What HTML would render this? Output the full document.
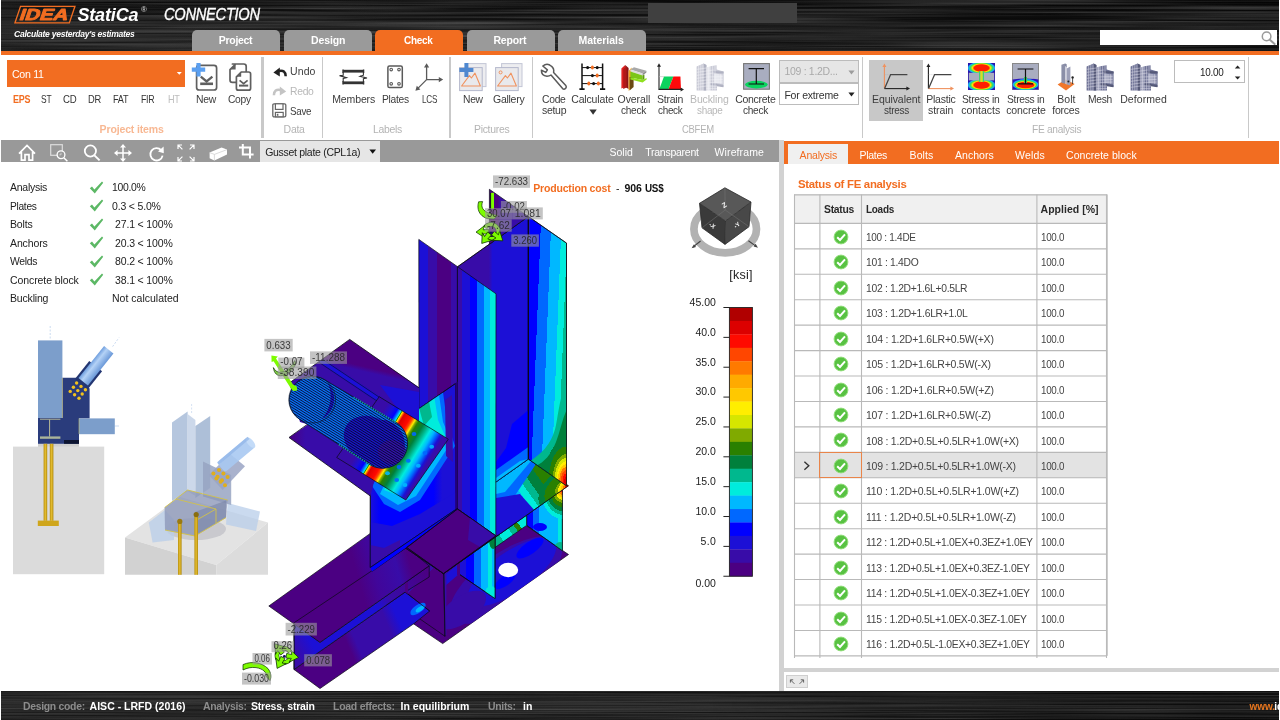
<!DOCTYPE html>
<html lang="en"><head><meta charset="utf-8"><title>IDEA StatiCa Connection</title>
<style>
html,body{margin:0;padding:0;background:#fff;}
#app{position:absolute;left:0;top:0;width:1280px;height:720px;overflow:hidden;will-change:transform;}
body{width:1280px;height:720px;overflow:hidden;position:relative;font-family:"Liberation Sans",sans-serif;}
.t{position:absolute;transform-origin:0 50%;white-space:nowrap;line-height:14px;font-family:"Liberation Sans",sans-serif;}
.r{position:absolute;box-sizing:border-box;}
svg{overflow:visible;}
svg text{font-family:"Liberation Sans",sans-serif;}
.metal{background:
 linear-gradient(90deg,rgba(255,255,255,.01) 0,rgba(255,255,255,.02) 30%,rgba(255,255,255,0) 50%,rgba(0,0,0,.3) 75%,rgba(0,0,0,.35) 100%),
 linear-gradient(180deg,#090909 0,#131313 30%,#1c1c1c 62%,#181818 88%,#111111 100%);}
.metal.sb{background:linear-gradient(90deg,rgba(0,0,0,0) 0,rgba(0,0,0,0) 55%,rgba(0,0,0,.5) 82%,rgba(0,0,0,.6) 100%),linear-gradient(180deg,#0e0e0e 0,#1c1c1c 12%,#262626 45%,#202020 75%,#181818 100%);}
.brush{position:absolute;left:0;top:0;width:100%;height:100%;}

</style></head>
<body>
<div id="app">
<header id="titlebar">
<div class="r metal" style="left:1px;top:0;width:1278px;height:51px"><svg class="brush" width="1278" height="51" preserveAspectRatio="none"><filter id="brushed" x="0" y="0" width="100%" height="100%"><feTurbulence type="fractalNoise" baseFrequency="0.0035 0.42" numOctaves="3" seed="4"/><feColorMatrix type="matrix" values="0 0 0 0 1  0 0 0 0 1  0 0 0 0 1  0.34 0 0 0 -0.10"/></filter><filter id="brushedk" x="0" y="0" width="100%" height="100%"><feTurbulence type="fractalNoise" baseFrequency="0.003 0.5" numOctaves="2" seed="11"/><feColorMatrix type="matrix" values="0 0 0 0 0  0 0 0 0 0  0 0 0 0 0  0.7 0 0 0 -0.2"/></filter><rect width="1278" height="51" filter="url(#brushedk)"/><rect width="1278" height="51" filter="url(#brushed)"/></svg></div>
<div class="r" style="left:647.5px;top:3px;width:149.5px;height:20px;background:#404040;"></div>
<svg class="r" style="left:0px;top:0px;" width="160" height="51" viewBox="0 0 160 51">
<g transform="translate(7.8 0) skewX(-18.7)">
<rect x="14.9" y="6.4" width="54.4" height="16.5" fill="none" stroke="#f26d21" stroke-width="1.4"/>
<text x="17.6" y="20.5" font-size="16" font-weight="bold" textLength="48.4" lengthAdjust="spacingAndGlyphs" fill="#f26d21" stroke="#f26d21" stroke-width="0.9" stroke-linejoin="round">IDEA</text>
</g></svg>
<span class="t" style="left:77.40px;top:7.80px;font-size:18px;color:#fff;letter-spacing:-0.134px;font-weight:bold;font-style:italic;">StatiCa</span>
<span class="t" style="left:141.00px;top:3.20px;font-size:8px;color:#ddd;">®</span>
<span class="t" style="left:163.50px;top:8.10px;font-size:16px;color:#fff;letter-spacing:-0.300px;font-style:italic;transform:scaleX(0.9164);-webkit-text-stroke:0.35px #fff;">CONNECTION</span>
<span class="t" style="left:14.40px;top:27.20px;font-size:9.5px;color:#fff;letter-spacing:-0.300px;font-weight:bold;font-style:italic;transform:scaleX(0.9002);">Calculate yesterday's estimates</span>
<nav id="maintabs">
<div class="r" style="left:192px;top:30px;width:88px;height:21.5px;background:#9a9a9a;border-radius:5px 5px 0 0;"></div>
<span class="t" style="left:218.80px;top:33.40px;font-size:10.5px;color:#fff;letter-spacing:-0.300px;font-weight:bold;">Project</span>
<div class="r" style="left:283.5px;top:30px;width:88px;height:21.5px;background:#9a9a9a;border-radius:5px 5px 0 0;"></div>
<span class="t" style="left:311.00px;top:33.40px;font-size:10.5px;color:#fff;letter-spacing:-0.119px;font-weight:bold;">Design</span>
<div class="r" style="left:375px;top:30px;width:88px;height:21.5px;background:#f26d21;border-radius:5px 5px 0 0;"></div>
<span class="t" style="left:404.40px;top:33.40px;font-size:10.5px;color:#fff;letter-spacing:-0.300px;font-weight:bold;transform:scaleX(0.9516);">Check</span>
<div class="r" style="left:466.5px;top:30px;width:88px;height:21.5px;background:#9a9a9a;border-radius:5px 5px 0 0;"></div>
<span class="t" style="left:493.40px;top:33.40px;font-size:10.5px;color:#fff;letter-spacing:-0.147px;font-weight:bold;">Report</span>
<div class="r" style="left:558px;top:30px;width:88px;height:21.5px;background:#9a9a9a;border-radius:5px 5px 0 0;"></div>
<span class="t" style="left:578.40px;top:33.40px;font-size:10.5px;color:#fff;letter-spacing:-0.010px;font-weight:bold;">Materials</span>
</nav>
<div class="r" style="left:1100px;top:29.7px;width:177px;height:15.5px;background:#fff;"></div>
<svg class="r" style="left:1259px;top:30px;" width="18" height="16" viewBox="0 0 18 16"><circle cx="7.6" cy="6.4" r="4.3" fill="none" stroke="#9a9a9a" stroke-width="1.5"/><path d="M10.6,9.6 L15.6,14" stroke="#9a9a9a" stroke-width="2" stroke-linecap="round"/></svg>
<div class="r" style="left:0.5px;top:50.6px;width:1278.5px;height:4.4px;background:#f26d21;"></div>
</header><section id="ribbon">
<div class="r" style="left:7px;top:60px;width:178px;height:26.8px;background:#f26d21;"></div>
<span class="t" style="left:12.20px;top:66.80px;font-size:11px;color:#fff;letter-spacing:-0.300px;transform:scaleX(0.9626);">Con 11</span>
<svg class="r" style="left:176px;top:71px;" width="7" height="5" viewBox="0 0 7 5"><path d="M0.8,1 L5.8,1 L3.3,3.8 Z" fill="#fff"/></svg>
<span class="t" style="left:12.60px;top:91.60px;font-size:10.5px;color:#f26d21;letter-spacing:-0.300px;font-weight:bold;transform:scaleX(0.8527);">EPS</span>
<span class="t" style="left:40.60px;top:91.60px;font-size:10.5px;color:#333;letter-spacing:-0.300px;transform:scaleX(0.8027);">ST</span>
<span class="t" style="left:63.00px;top:91.60px;font-size:10.5px;color:#333;letter-spacing:-0.300px;transform:scaleX(0.9161);">CD</span>
<span class="t" style="left:88.40px;top:91.60px;font-size:10.5px;color:#333;letter-spacing:-0.300px;transform:scaleX(0.8899);">DR</span>
<span class="t" style="left:112.60px;top:91.60px;font-size:10.5px;color:#333;letter-spacing:-0.300px;transform:scaleX(0.8668);">FAT</span>
<span class="t" style="left:141.00px;top:91.60px;font-size:10.5px;color:#333;letter-spacing:-0.300px;transform:scaleX(0.8368);">FIR</span>
<span class="t" style="left:167.60px;top:91.60px;font-size:10.5px;color:#bdbdbd;letter-spacing:-0.300px;transform:scaleX(0.8682);">HT</span>
<span class="t" style="left:99.60px;top:122.20px;font-size:10.5px;color:#f8b893;letter-spacing:-0.142px;font-weight:bold;">Project items</span>
<svg class="r" style="left:192px;top:63px;" width="28" height="29" viewBox="0 0 28 29"><rect x="4.6" y="2.4" width="20" height="24.6" rx="2.6" fill="#fff" stroke="#5f5f5f" stroke-width="1.7"/>
<path d="M8.8,13.6 L14.6,18.4 L20.4,13.6" fill="none" stroke="#5f5f5f" stroke-width="2.3"/>
<path d="M8.2,20.8 L21,20.8" stroke="#5f5f5f" stroke-width="2.6"/>
<path d="M6.5,0 L6.5,13.4 M-0.2,6.7 L13.2,6.7" stroke="#5b9ff0" stroke-width="4.2"/></svg>
<span class="t" style="left:195.80px;top:91.60px;font-size:10.5px;color:#3c3c3c;letter-spacing:-0.300px;transform:scaleX(0.9893);">New</span>
<svg class="r" style="left:228.6px;top:63px;" width="23" height="29" viewBox="0 0 23 29"><path d="M3.4,1 L14.8,1 Q17.2,1 17.2,3.4 L17.2,19.4 L3.4,19.4 Q1,19.4 1,17 L1,6.6 L6.6,1 Z" fill="#fff" stroke="#5f5f5f" stroke-width="1.7" stroke-linejoin="round"/>
<path d="M1.2,6.6 L6.6,6.6 L6.6,1.2 Z" fill="#5f5f5f"/>
<path d="M12.2,9 L19.6,9 Q21.6,9 21.6,11 L21.6,25.2 Q21.6,27.2 19.6,27.2 L9.4,27.2 Q7.4,27.2 7.4,25.2 L7.4,13.8 Z" fill="#fff" stroke="#5f5f5f" stroke-width="1.7" stroke-linejoin="round"/>
<path d="M7.6,13.8 L12.2,13.8 L12.2,9.2 Z" fill="#5f5f5f"/>
<path d="M10.6,17.4 L14.6,20.6 L18.6,17.4" fill="none" stroke="#5f5f5f" stroke-width="1.7"/>
<path d="M10,22.6 L19.2,22.6" stroke="#5f5f5f" stroke-width="2"/></svg>
<span class="t" style="left:228.20px;top:91.60px;font-size:10.5px;color:#3c3c3c;letter-spacing:-0.300px;transform:scaleX(0.9769);">Copy</span>
<div class="r" style="left:260.6px;top:57px;width:3.4px;height:80.5px;background:#c9c9c9;"></div>
<svg class="r" style="left:272.6px;top:66.6px;" width="14" height="10" viewBox="0 0 14 10"><path d="M0.4,5.4 L6.8,0.6 L6.8,9.6 Z" fill="#222"/><path d="M6,4 Q12.4,2.6 12.7,9.2" fill="none" stroke="#222" stroke-width="2.5"/></svg>
<span class="t" style="left:290.00px;top:64.20px;font-size:10.5px;color:#3c3c3c;letter-spacing:0.113px;">Undo</span>
<svg class="r" style="left:272.6px;top:86.4px;" width="14" height="10" viewBox="0 0 14 10"><g transform="translate(13.6,0) scale(-1,1)"><path d="M0.4,5.4 L6.8,0.6 L6.8,9.6 Z" fill="#c4c4c4"/><path d="M6,4 Q12.4,2.6 12.7,9.2" fill="none" stroke="#c4c4c4" stroke-width="2.5"/></g></svg>
<span class="t" style="left:290.00px;top:84.00px;font-size:10.5px;color:#b8b8b8;letter-spacing:-0.300px;transform:scaleX(0.9851);">Redo</span>
<svg class="r" style="left:271.8px;top:103px;" width="15" height="15" viewBox="0 0 15 15"><rect x="0.8" y="0.8" width="13" height="13" rx="1.2" fill="#fff" stroke="#666" stroke-width="1.3"/>
<rect x="3.4" y="0.8" width="7.6" height="5.6" fill="#fff" stroke="#666" stroke-width="1.2"/>
<rect x="3.4" y="9.4" width="7.8" height="4.4" fill="#fff" stroke="#666" stroke-width="1.2"/>
<rect x="4.8" y="10.8" width="1.6" height="2" fill="#666"/></svg>
<span class="t" style="left:290.00px;top:103.60px;font-size:10.5px;color:#3c3c3c;letter-spacing:-0.300px;transform:scaleX(0.9313);">Save</span>
<span class="t" style="left:283.60px;top:122.20px;font-size:10.5px;color:#b4b4b4;letter-spacing:-0.300px;">Data</span>
<div class="r" style="left:322px;top:57px;width:1.2px;height:80.5px;background:#c9c9c9;"></div>
<svg class="r" style="left:339.4px;top:66.6px;" width="29" height="20" viewBox="0 0 29 20"><path d="M4,2.6 L4,6 M24.6,2.6 L24.6,6 M4,14 L4,17.6 M24.6,14 L24.6,17.6" stroke="#333" stroke-width="1.4"/>
<path d="M4,4.2 L24.6,4.2" stroke="#333" stroke-width="2.8"/>
<path d="M4,15.8 L24.6,15.8" stroke="#333" stroke-width="2.8"/>
<path d="M4.2,5.6 L4.2,8.2 L0.6,8.6 L7.4,10.6 L4.2,11.4 L4.2,14.4" fill="none" stroke="#333" stroke-width="1.1"/>
<path d="M24.4,5.6 L24.4,8.2 L21,9.4 L28,11 L24.4,11.8 L24.4,14.4" fill="none" stroke="#333" stroke-width="1.1"/></svg>
<span class="t" style="left:332.20px;top:91.60px;font-size:10.5px;color:#3c3c3c;letter-spacing:-0.118px;">Members</span>
<svg class="r" style="left:387.2px;top:65.2px;" width="17" height="24" viewBox="0 0 17 24"><rect x="0.9" y="0.9" width="14.4" height="21.6" rx="1.6" fill="#fff" stroke="#5a5a5a" stroke-width="1.5"/>
<g fill="none" stroke="#5a5a5a" stroke-width="1.1"><circle cx="4.2" cy="4.6" r="1.3"/><circle cx="12" cy="4.6" r="1.3"/><circle cx="4.2" cy="18.8" r="1.3"/><circle cx="12" cy="18.8" r="1.3"/></g></svg>
<span class="t" style="left:382.20px;top:91.60px;font-size:10.5px;color:#3c3c3c;letter-spacing:-0.300px;transform:scaleX(0.9769);">Plates</span>
<svg class="r" style="left:414.6px;top:62.8px;" width="29" height="29" viewBox="0 0 29 29"><path d="M11.6,16.6 L11.6,3.4 M11.6,16.6 L25,16.6 M11.6,16.6 L2.6,25.6" stroke="#5a5a5a" stroke-width="1.3" fill="none"/>
<path d="M11.6,0.2 L14.2,4.6 L9,4.6 Z M28.2,16.6 L23.8,19.2 L23.8,14 Z M0.4,27.8 L1.8,22.8 L5.4,26.4 Z" fill="#5a5a5a"/></svg>
<span class="t" style="left:421.60px;top:91.60px;font-size:10.5px;color:#3c3c3c;letter-spacing:-0.300px;transform:scaleX(0.7769);">LCS</span>
<span class="t" style="left:373.00px;top:122.20px;font-size:10.5px;color:#b4b4b4;letter-spacing:-0.300px;transform:scaleX(0.9935);">Labels</span>
<div class="r" style="left:449.4px;top:57px;width:1.2px;height:80.5px;background:#c9c9c9;"></div>
<svg class="r" style="left:458.8px;top:63px;" width="28" height="29" viewBox="0 0 28 29"><rect x="6.6" y="0.6" width="20.4" height="23" fill="#ededf0" stroke="#c3c6d6" stroke-width="1"/>
<rect x="0.6" y="4.6" width="22.6" height="23" fill="#e9e9ec" stroke="#b4b8cc" stroke-width="1"/>
<path d="M2.6,23 L10.4,12.6 L12.4,15 L16,10.2 L21.4,23 Z" fill="none" stroke="#f0925e" stroke-width="1.1" stroke-linejoin="round"/><path d="M7.4,0 L7.4,14 M0.4,7 L14.4,7" stroke="#4f88d0" stroke-width="4"/></svg>
<span class="t" style="left:462.60px;top:91.60px;font-size:10.5px;color:#3c3c3c;letter-spacing:-0.300px;transform:scaleX(0.9797);">New</span>
<svg class="r" style="left:494.8px;top:63px;" width="28" height="29" viewBox="0 0 28 29"><rect x="6.6" y="0.6" width="20.4" height="23" fill="#ededf0" stroke="#c3c6d6" stroke-width="1"/>
<rect x="0.6" y="4.6" width="22.6" height="23" fill="#e9e9ec" stroke="#b4b8cc" stroke-width="1"/>
<path d="M2.6,23 L10.4,12.6 L12.4,15 L16,10.2 L21.4,23 Z" fill="none" stroke="#f0925e" stroke-width="1.1" stroke-linejoin="round"/><circle cx="5.6" cy="9.4" r="1.5" fill="none" stroke="#f0925e" stroke-width="1"/></svg>
<span class="t" style="left:493.00px;top:91.60px;font-size:10.5px;color:#3c3c3c;letter-spacing:-0.268px;">Gallery</span>
<span class="t" style="left:474.00px;top:122.20px;font-size:10.5px;color:#b4b4b4;letter-spacing:-0.300px;transform:scaleX(0.9950);">Pictures</span>
<div class="r" style="left:531.6px;top:57px;width:1.2px;height:80.5px;background:#c9c9c9;"></div>
<svg class="r" style="left:540.6px;top:63.4px;" width="27" height="28" viewBox="0 0 27 28"><path d="M10.4,3.2 Q6.2,-0.6 1.8,3 L6.4,6.8 L4.8,9.4 L0.4,7.2 Q0.2,12.6 6,13.2 Q8.4,13.2 10,12 L21.6,25.6 Q23,26.8 24.6,25.4 Q26,23.8 24.8,22.4 L12.6,9.4 Q13.4,5.6 10.4,3.2 Z" fill="#fff" stroke="#5a5a5a" stroke-width="1.5" stroke-linejoin="round"/></svg>
<span class="t" style="left:542.20px;top:91.60px;font-size:10.5px;color:#3c3c3c;letter-spacing:-0.300px;transform:scaleX(0.9851);">Code</span>
<span class="t" style="left:542.00px;top:103.00px;font-size:10.5px;color:#3c3c3c;letter-spacing:-0.300px;">setup</span>
<svg class="r" style="left:578.8px;top:63.4px;" width="27" height="28" viewBox="0 0 27 28"><path d="M3,0.6 L3,26 M23.6,0.6 L23.6,26" stroke="#111" stroke-width="1.5"/>
<path d="M0.4,26.2 L5.6,26.2 M21,26.2 L26.2,26.2" stroke="#111" stroke-width="1.8"/>
<path d="M3,4.6 L23.6,4.6 M3,12.6 L23.6,12.6 M3,20.6 L23.6,20.6" stroke="#111" stroke-width="1"/>
<g fill="#111"><ellipse cx="8.6" cy="4.6" rx="1.5" ry="1.7"/><ellipse cx="18.2" cy="4.6" rx="1.5" ry="1.7"/><ellipse cx="13.4" cy="12.6" rx="1.5" ry="1.7"/><ellipse cx="14.6" cy="20.6" rx="1.5" ry="1.7"/></g>
<g fill="#f26d21"><ellipse cx="13.4" cy="4.6" rx="1.5" ry="2"/><ellipse cx="18.2" cy="12.6" rx="1.5" ry="2"/><ellipse cx="9.8" cy="20.6" rx="1.5" ry="2"/><ellipse cx="19.4" cy="20.6" rx="1.5" ry="2"/></g></svg>
<span class="t" style="left:571.20px;top:91.60px;font-size:10.5px;color:#3c3c3c;letter-spacing:-0.142px;">Calculate</span>
<svg class="r" style="left:588.6px;top:108.6px;" width="9" height="7" viewBox="0 0 9 7"><path d="M0.4,0.6 L7.8,0.6 L4.1,5.8 Z" fill="#333"/></svg>
<svg class="r" style="left:619.6px;top:62.8px;" width="28" height="29" viewBox="0 0 28 29"><polygon points="1.4,5.6 5.2,2 5.2,24 1.4,25.6" fill="#e02020"/>
<polygon points="5.2,2 8.6,5 8.6,26 5.2,24" fill="#8c1414"/>
<polygon points="3.2,6 6.6,3.6 6.6,24.6 3.2,26" fill="#b01818"/>
<polygon points="8.6,8 11.6,4.6 11.6,24.4 8.6,28" fill="#f5a623"/>
<polygon points="9.6,14 13.6,14 13.6,24 9.6,27.6" fill="#6a4a14"/>
<polygon points="10.4,6.6 14,4.2 26.4,7.8 22.6,10.6" fill="#a8a8a8"/>
<polygon points="10.4,6.6 22.6,10.6 22.6,12.6 10.4,8.6" fill="#dcdcdc"/>
<polygon points="10.4,8.6 22.6,12.6 22.6,17 10.4,14.4" fill="#7bc618"/>
<polygon points="22.6,10.6 26.4,7.8 26.4,9.6 22.6,12.6" fill="#8c8c8c"/>
<polygon points="10.4,14.4 22.6,17 26.6,15 26.6,16.6 22.6,19.4 10.4,16.6" fill="#8fe01e"/>
<polygon points="22.6,12.6 24.4,11.4 24.4,16 22.6,17" fill="#5c9a10"/></svg>
<span class="t" style="left:617.60px;top:91.60px;font-size:10.5px;color:#3c3c3c;letter-spacing:-0.088px;">Overall</span>
<span class="t" style="left:621.00px;top:103.00px;font-size:10.5px;color:#3c3c3c;letter-spacing:-0.300px;transform:scaleX(0.9637);">check</span>
<svg class="r" style="left:655.6px;top:62.8px;" width="29" height="29" viewBox="0 0 29 29"><polygon points="3.4,26 8,13.6 17.4,13.6 12.6,26" fill="#0bd35e"/>
<polygon points="12.6,26 17.4,13.6 24.4,13.6 25,26" fill="#ff0a0a"/>
<path d="M3,27 L3,2 M2.4,26.4 L26,26.4" stroke="#222" stroke-width="1.1" fill="none"/>
<path d="M3,0.2 L5,3.8 L1,3.8 Z M28,26.4 L24.6,28.4 L24.6,24.4 Z" fill="#222"/>
<path d="M3,13.6 L8,13.6" stroke="#bbb" stroke-width="0.6"/></svg>
<span class="t" style="left:657.00px;top:91.60px;font-size:10.5px;color:#3c3c3c;letter-spacing:-0.238px;">Strain</span>
<span class="t" style="left:658.00px;top:103.00px;font-size:10.5px;color:#3c3c3c;letter-spacing:-0.300px;transform:scaleX(0.9415);">check</span>
<svg class="r" style="left:696px;top:63px;" width="28" height="28" viewBox="0 0 28 28"><polygon points="0.6,3.4 7.6,0.6 10.4,2 10.4,27.6 0.6,27.6" fill="#c9cad6"/>
<polygon points="7.6,0.6 10.4,2 10.4,27.6 7.6,27.6" fill="#b0b2c2"/>
<polygon points="10.4,4.6 14.4,3.2 14.4,27.6 10.4,27.6" fill="#e4e5ec"/>
<polygon points="14.4,3.2 20.6,2.2 20.6,6.6 27.6,8.6 27.6,24 21,22.2 21,27.6 14.4,27.6" fill="#c9cad6"/>
<polygon points="17.6,8 27.6,8.6 27.6,10.4 17.6,9.8" fill="#b0b2c2"/>
<polygon points="17.8,10.4 26.6,11.4 26.6,21 17.8,19.6" fill="#e4e5ec"/>
<polygon points="14.6,20 27.4,22 27.4,24.2 14.6,22.2" fill="#b0b2c2"/>
<path d="M2.6,2.8 L2.6,27.6 M4.8,2 L4.8,27.6 M7,1.2 L7,27.6 M12.4,4 L12.4,27.6 M16.6,3 L16.6,27.6 M19,2.6 L19,27.6 M22,11 L22,20.4 M24.4,11.2 L24.4,20.8 M20,10.6 L20,20" stroke="#f4f4f8" stroke-width="0.5" fill="none"/>
<path d="M0.6,6.4 L10.4,5 M0.6,9.4 L10.4,8 M0.6,12.4 L10.4,11 M0.6,15.4 L10.4,14 M0.6,18.4 L10.4,17 M0.6,21.4 L10.4,20 M0.6,24.4 L10.4,23 M10.4,8 L17.6,7 M10.4,11 L17.6,10 M10.4,14 L26.6,13.6 M10.4,17 L26.6,16.4 M10.4,20 L26.6,19 M10.4,23 L21,23 M10.4,25.6 L21,25.6" stroke="#f4f4f8" stroke-width="0.5" fill="none"/></svg>
<span class="t" style="left:690.00px;top:91.60px;font-size:10.5px;color:#b8b8b8;letter-spacing:-0.121px;">Buckling</span>
<span class="t" style="left:697.00px;top:103.00px;font-size:10.5px;color:#b8b8b8;letter-spacing:-0.300px;transform:scaleX(0.9431);">shape</span>
<svg class="r" style="left:743px;top:63.2px;" width="27" height="27" viewBox="0 0 27 27"><rect x="0.6" y="0.6" width="25.8" height="25.6" fill="#a9adc0" stroke="#777" stroke-width="1.1"/>
<ellipse cx="13.4" cy="21.6" rx="11.4" ry="3.8" fill="#0bd35e"/>
<path d="M5.6,5.6 L21,5.6 M5.6,21 L21,21 M13.3,5.6 L13.3,21" stroke="#111" stroke-width="1.2" fill="none"/></svg>
<span class="t" style="left:735.20px;top:91.60px;font-size:10.5px;color:#3c3c3c;letter-spacing:-0.281px;">Concrete</span>
<span class="t" style="left:743.00px;top:103.00px;font-size:10.5px;color:#3c3c3c;letter-spacing:-0.300px;transform:scaleX(0.9637);">check</span>
<div class="r" style="left:779.4px;top:60px;width:79.4px;height:22.8px;background:#e6e6e6;border:1px solid #bcbcbc;"></div>
<span class="t" style="left:784.40px;top:64.40px;font-size:10.5px;color:#a9a9a9;letter-spacing:-0.300px;">109 : 1.2D...</span>
<svg class="r" style="left:848px;top:69.6px;" width="8" height="6" viewBox="0 0 8 6"><path d="M0.4,0.6 L6.6,0.6 L3.5,4.6 Z" fill="#9c9c9c"/></svg>
<div class="r" style="left:779.4px;top:82.8px;width:79.4px;height:22.6px;background:#fff;border:1px solid #bcbcbc;"></div>
<span class="t" style="left:784.40px;top:87.60px;font-size:10.5px;color:#333;letter-spacing:-0.216px;">For extreme</span>
<svg class="r" style="left:848px;top:92px;" width="8" height="6" viewBox="0 0 8 6"><path d="M0.4,0.6 L6.6,0.6 L3.5,4.6 Z" fill="#222"/></svg>
<span class="t" style="left:681.60px;top:122.20px;font-size:10.5px;color:#b4b4b4;letter-spacing:-0.300px;transform:scaleX(0.9022);">CBFEM</span>
<div class="r" style="left:862px;top:57px;width:1.2px;height:80.5px;background:#c9c9c9;"></div>
<div class="r" style="left:868.8px;top:60px;width:54.4px;height:61px;background:#c8c8c8;"></div>
<svg class="r" style="left:881.6px;top:63px;" width="29" height="29" viewBox="0 0 29 29"><path d="M2.4,25.4 L2.4,3" stroke="#f0925e" stroke-width="1.1"/><path d="M2.4,0.4 L4.4,4 L0.4,4 Z" fill="#f0925e"/>
<path d="M2.4,25.6 L25,25.6" stroke="#222" stroke-width="1.1"/><path d="M28,25.6 L24.4,27.6 L24.4,23.6 Z" fill="#222"/>
<path d="M2.6,25.4 L8.6,11.6 L25.4,11.6" fill="none" stroke="#444" stroke-width="1.3"/>
<path d="M2.6,11.6 L8,11.6" stroke="#aaa" stroke-width="0.5" stroke-dasharray="1,1"/></svg>
<span class="t" style="left:872.00px;top:91.60px;font-size:10.5px;color:#3c3c3c;letter-spacing:-0.080px;">Equivalent</span>
<span class="t" style="left:883.60px;top:103.00px;font-size:10.5px;color:#3c3c3c;letter-spacing:-0.300px;transform:scaleX(0.9523);">stress</span>
<svg class="r" style="left:925.8px;top:63px;" width="29" height="29" viewBox="0 0 29 29"><path d="M2.4,25.4 L2.4,3" stroke="#222" stroke-width="1.1"/><path d="M2.4,0.4 L4.4,4 L0.4,4 Z" fill="#222"/>
<path d="M2.4,25.6 L25,25.6" stroke="#f0925e" stroke-width="1.1"/><path d="M28,25.6 L24.4,27.6 L24.4,23.6 Z" fill="#f0925e"/>
<path d="M2.6,25.4 L8.6,11.6 L25.4,11.6" fill="none" stroke="#444" stroke-width="1.3"/>
<path d="M2.6,11.6 L8,11.6" stroke="#aaa" stroke-width="0.5" stroke-dasharray="1,1"/></svg>
<span class="t" style="left:926.20px;top:91.60px;font-size:10.5px;color:#3c3c3c;letter-spacing:-0.213px;">Plastic</span>
<span class="t" style="left:928.00px;top:103.00px;font-size:10.5px;color:#3c3c3c;letter-spacing:-0.087px;">strain</span>
<svg class="r" style="left:967.6px;top:63.4px;overflow:hidden;" width="27" height="27" viewBox="0 0 27 27"><defs><radialGradient id="gct" cx="50%" cy="50%" r="50%"><stop offset="0" stop-color="#ff1e00"/><stop offset=".5" stop-color="#ff1e00"/><stop offset=".62" stop-color="#ffe000"/><stop offset=".76" stop-color="#30e060"/><stop offset=".88" stop-color="#18b0ff"/><stop offset="1" stop-color="#2010b0"/></radialGradient></defs>
<rect x="0" y="0" width="27" height="27" fill="#2a14a8"/>
<ellipse cx="13.5" cy="5" rx="14.6" ry="6.6" fill="url(#gct)"/>
<ellipse cx="13.5" cy="22" rx="14.6" ry="6.6" fill="url(#gct)"/>
<rect x="0.8" y="9.8" width="25.4" height="7.6" fill="#a9adc0"/>
<rect x="12.2" y="8" width="2.6" height="11" fill="#d8e020"/>
<rect x="11" y="8" width="1.2" height="11" fill="#40d070"/><rect x="14.8" y="8" width="1.2" height="11" fill="#40d070"/></svg>
<span class="t" style="left:962.20px;top:91.60px;font-size:10.5px;color:#3c3c3c;letter-spacing:-0.300px;transform:scaleX(0.9791);">Stress in</span>
<span class="t" style="left:961.20px;top:103.00px;font-size:10.5px;color:#3c3c3c;letter-spacing:-0.008px;">contacts</span>
<svg class="r" style="left:1012px;top:63.4px;overflow:hidden;" width="27" height="27" viewBox="0 0 27 27"><rect x="0.5" y="0.5" width="26" height="26" fill="#a9adc0" stroke="#888" stroke-width="1"/>
<path d="M0.6,26.4 L0.6,16.6 Q13.5,14.6 26.4,16.6 L26.4,26.4 Z" fill="#2a14c0"/>
<ellipse cx="13.5" cy="21.6" rx="12.8" ry="5.6" fill="#18b0ff"/>
<ellipse cx="13.5" cy="21.8" rx="11.6" ry="4.8" fill="#30e060"/>
<ellipse cx="13.5" cy="22" rx="10.4" ry="4" fill="#ffe000"/>
<ellipse cx="13.5" cy="22" rx="9" ry="3.2" fill="#ff1e00"/>
<path d="M13.5,14 L13.5,20" stroke="#30e060" stroke-width="3"/>
<path d="M5.6,6 L21.4,6 M6,20.8 L21,20.8 M13.5,6 L13.5,20.8" stroke="#111" stroke-width="1.2" fill="none"/></svg>
<span class="t" style="left:1007.20px;top:91.60px;font-size:10.5px;color:#3c3c3c;letter-spacing:-0.300px;transform:scaleX(0.9791);">Stress in</span>
<span class="t" style="left:1006.20px;top:103.00px;font-size:10.5px;color:#3c3c3c;letter-spacing:-0.090px;">concrete</span>
<svg class="r" style="left:1056.6px;top:63px;" width="19" height="28" viewBox="0 0 19 28"><polygon points="0.6,21.6 8.6,16.4 17.6,21 9,27.4" fill="#f0762a"/>
<polygon points="4.4,1.8 8.2,0.4 8.2,20.8 4.4,19.8" fill="#8b8fa8"/>
<polygon points="8.2,2.6 9.8,3.4 9.8,21.4 8.2,20.8" fill="#c8cad8"/>
<polygon points="9.8,5.4 13.4,3.4 13.4,22.6 9.8,21.4" fill="#9da0b8"/>
<polygon points="8.2,0.4 9.6,1.2 9.6,4 8.2,3" fill="#6e7290"/>
<path d="M15.6,14.6 L15.6,21" stroke="#222" stroke-width="0.8"/><circle cx="15.6" cy="14.4" r="1.2" fill="#222"/><circle cx="11.4" cy="18.6" r="1" fill="#222"/></svg>
<span class="t" style="left:1057.20px;top:91.60px;font-size:10.5px;color:#3c3c3c;letter-spacing:0.075px;">Bolt</span>
<span class="t" style="left:1052.20px;top:103.00px;font-size:10.5px;color:#3c3c3c;letter-spacing:-0.229px;">forces</span>
<svg class="r" style="left:1086.2px;top:63px;" width="28" height="28" viewBox="0 0 28 28"><polygon points="0.6,3.4 7.6,0.6 10.4,2 10.4,27.6 0.6,27.6" fill="#6f7396"/>
<polygon points="7.6,0.6 10.4,2 10.4,27.6 7.6,27.6" fill="#555978"/>
<polygon points="10.4,4.6 14.4,3.2 14.4,27.6 10.4,27.6" fill="#9a9db8"/>
<polygon points="14.4,3.2 20.6,2.2 20.6,6.6 27.6,8.6 27.6,24 21,22.2 21,27.6 14.4,27.6" fill="#6f7396"/>
<polygon points="17.6,8 27.6,8.6 27.6,10.4 17.6,9.8" fill="#555978"/>
<polygon points="17.8,10.4 26.6,11.4 26.6,21 17.8,19.6" fill="#9a9db8"/>
<polygon points="14.6,20 27.4,22 27.4,24.2 14.6,22.2" fill="#555978"/>
<path d="M2.6,2.8 L2.6,27.6 M4.8,2 L4.8,27.6 M7,1.2 L7,27.6 M12.4,4 L12.4,27.6 M16.6,3 L16.6,27.6 M19,2.6 L19,27.6 M22,11 L22,20.4 M24.4,11.2 L24.4,20.8 M20,10.6 L20,20" stroke="#dcdce8" stroke-width="0.5" fill="none"/>
<path d="M0.6,6.4 L10.4,5 M0.6,9.4 L10.4,8 M0.6,12.4 L10.4,11 M0.6,15.4 L10.4,14 M0.6,18.4 L10.4,17 M0.6,21.4 L10.4,20 M0.6,24.4 L10.4,23 M10.4,8 L17.6,7 M10.4,11 L17.6,10 M10.4,14 L26.6,13.6 M10.4,17 L26.6,16.4 M10.4,20 L26.6,19 M10.4,23 L21,23 M10.4,25.6 L21,25.6" stroke="#dcdce8" stroke-width="0.5" fill="none"/></svg>
<span class="t" style="left:1088.00px;top:91.60px;font-size:10.5px;color:#3c3c3c;letter-spacing:-0.300px;transform:scaleX(0.9785);">Mesh</span>
<svg class="r" style="left:1130.2px;top:63px;" width="28" height="28" viewBox="0 0 28 28"><polygon points="0.6,3.4 7.6,0.6 10.4,2 10.4,27.6 0.6,27.6" fill="#6f7396"/>
<polygon points="7.6,0.6 10.4,2 10.4,27.6 7.6,27.6" fill="#555978"/>
<polygon points="10.4,4.6 14.4,3.2 14.4,27.6 10.4,27.6" fill="#9a9db8"/>
<polygon points="14.4,3.2 20.6,2.2 20.6,6.6 27.6,8.6 27.6,24 21,22.2 21,27.6 14.4,27.6" fill="#6f7396"/>
<polygon points="17.6,8 27.6,8.6 27.6,10.4 17.6,9.8" fill="#555978"/>
<polygon points="17.8,10.4 26.6,11.4 26.6,21 17.8,19.6" fill="#9a9db8"/>
<polygon points="14.6,20 27.4,22 27.4,24.2 14.6,22.2" fill="#555978"/>
<path d="M2.6,2.8 L2.6,27.6 M4.8,2 L4.8,27.6 M7,1.2 L7,27.6 M12.4,4 L12.4,27.6 M16.6,3 L16.6,27.6 M19,2.6 L19,27.6 M22,11 L22,20.4 M24.4,11.2 L24.4,20.8 M20,10.6 L20,20" stroke="#dcdce8" stroke-width="0.5" fill="none"/>
<path d="M0.6,6.4 L10.4,5 M0.6,9.4 L10.4,8 M0.6,12.4 L10.4,11 M0.6,15.4 L10.4,14 M0.6,18.4 L10.4,17 M0.6,21.4 L10.4,20 M0.6,24.4 L10.4,23 M10.4,8 L17.6,7 M10.4,11 L17.6,10 M10.4,14 L26.6,13.6 M10.4,17 L26.6,16.4 M10.4,20 L26.6,19 M10.4,23 L21,23 M10.4,25.6 L21,25.6" stroke="#dcdce8" stroke-width="0.5" fill="none"/></svg>
<span class="t" style="left:1120.20px;top:91.60px;font-size:10.5px;color:#3c3c3c;letter-spacing:0.077px;">Deformed</span>
<div class="r" style="left:1173.6px;top:60px;width:71px;height:22.8px;background:#fff;border:1px solid #bcbcbc;"></div>
<span class="t" style="left:1200.20px;top:64.60px;font-size:10.5px;color:#222;letter-spacing:-0.300px;transform:scaleX(0.9431);">10.00</span>
<svg class="r" style="left:1233.6px;top:64.6px;" width="8" height="15" viewBox="0 0 8 15"><path d="M0.8,3.4 L6.4,3.4 L3.6,0.4 Z M0.8,11.4 L6.4,11.4 L3.6,14.4 Z" fill="#222"/></svg>
<span class="t" style="left:1032.00px;top:122.20px;font-size:10.5px;color:#b4b4b4;letter-spacing:-0.300px;transform:scaleX(0.9683);">FE analysis</span>
<div class="r" style="left:1248px;top:57px;width:1.2px;height:80.5px;background:#c9c9c9;"></div>
</section><section id="viewbar">
<div class="r" style="left:1px;top:140.4px;width:777.8px;height:21.9px;background:#999;"></div>
<svg class="r" style="left:17.6px;top:143.6px;" width="18" height="18" viewBox="0 0 18 18"><path d="M1,9.6 L9,1.4 L17,9.6 M3.4,8 L3.4,16.2 L7,16.2 L7,10.6 L11,10.6 L11,16.2 L14.6,16.2 L14.6,8" fill="none" stroke="#fff" stroke-width="1.7" stroke-linejoin="miter"/></svg>
<svg class="r" style="left:50px;top:144px;" width="18" height="18" viewBox="0 0 18 18"><rect x="0.7" y="0.7" width="11.6" height="10.6" fill="none" stroke="#ddd" stroke-width="1.2"/><circle cx="11" cy="10.8" r="3.9" fill="#999" stroke="#fff" stroke-width="1.3"/><path d="M13.8,13.8 L17.4,17.2" stroke="#fff" stroke-width="1.5"/><path d="M11,8.8 L11,10.8 L9.4,10.8" stroke="#ddd" stroke-width=".8" fill="none"/></svg>
<svg class="r" style="left:83px;top:144.4px;" width="18" height="18" viewBox="0 0 18 18"><circle cx="7.4" cy="7" r="5.6" fill="none" stroke="#fff" stroke-width="1.8"/><path d="M11.4,11.4 L16.6,16.4" stroke="#fff" stroke-width="2"/></svg>
<svg class="r" style="left:114px;top:143.6px;" width="18" height="18" viewBox="0 0 18 18"><path d="M9,1.6 L9,16.6 M1.6,9 L16.6,9" stroke="#fff" stroke-width="1.5"/><path d="M9,0 L12,3.6 L6,3.6 Z M9,18 L12,14.4 L6,14.4 Z M0,9 L3.6,6 L3.6,12 Z M18,9 L14.4,6 L14.4,12 Z" fill="#fff"/></svg>
<svg class="r" style="left:148px;top:145.6px;" width="17" height="15" viewBox="0 0 17 15"><path d="M13.2,4.2 A6.2,6.2 0 1 0 14.6,9.6" fill="none" stroke="#fff" stroke-width="1.8"/><path d="M10,5.6 L15.6,0.6 L15.8,7.2 Z" fill="#fff"/></svg>
<svg class="r" style="left:177px;top:143.8px;" width="18" height="18" viewBox="0 0 18 18"><g stroke="#fff" stroke-width="1.2" fill="none"><path d="M1,5 L1,1 L5,1 M1.2,1.2 L5.4,5.4"/><path d="M13,1 L17,1 L17,5 M16.8,1.2 L12.6,5.4"/><path d="M1,13 L1,17 L5,17 M1.2,16.8 L5.4,12.6"/><path d="M13,17 L17,17 L17,13 M16.8,16.8 L12.6,12.6"/></g></svg>
<svg class="r" style="left:209px;top:146.6px;" width="19" height="14" viewBox="0 0 19 14"><polygon points="0.6,5.6 12.6,0.6 18,2.6 18,7.6 5.4,13.4 0.6,11.2" fill="#fff"/><path d="M0.6,5.6 L5.4,7.4 L18,2.6 M5.4,7.4 L5.4,13.4" stroke="#ccc" stroke-width="0.7" fill="none"/></svg>
<svg class="r" style="left:238.6px;top:143.8px;" width="15" height="15" viewBox="0 0 15 15"><path d="M3.8,0 L3.8,10.6 L14.6,10.6 M0,3.6 L11,3.6 L11,14.4" fill="none" stroke="#fff" stroke-width="2"/></svg>
<div class="r" style="left:259.6px;top:141px;width:120.4px;height:21.2px;background:#e6e6e6;"></div>
<span class="t" style="left:265.20px;top:144.60px;font-size:10.5px;color:#222;letter-spacing:-0.298px;">Gusset plate (CPL1a)</span>
<svg class="r" style="left:368.6px;top:149px;" width="8" height="6" viewBox="0 0 8 6"><path d="M0.4,0.6 L7,0.6 L3.7,4.8 Z" fill="#111"/></svg>
<span class="t" style="left:609.40px;top:145.20px;font-size:10.5px;color:#fff;letter-spacing:0.023px;">Solid</span>
<span class="t" style="left:645.20px;top:145.20px;font-size:10.5px;color:#fff;letter-spacing:-0.250px;">Transparent</span>
<span class="t" style="left:714.60px;top:145.20px;font-size:10.5px;color:#fff;letter-spacing:0.103px;">Wireframe</span>
</section><main id="scene">
<span class="t" style="left:10.00px;top:180.40px;font-size:10.5px;color:#222;letter-spacing:-0.264px;">Analysis</span>
<span class="t" style="left:112.00px;top:180.40px;font-size:10.5px;color:#222;letter-spacing:-0.300px;transform:scaleX(0.9889);">100.0%</span>
<svg class="r" style="left:88.6px;top:180.8px;" width="15" height="13" viewBox="0 0 15 13"><path d="M0.8,7.2 L3,5.6 L5.4,8.6 L13,0.6 L14.2,1.8 L5.8,12.6 Z" fill="#5cb865"/></svg>
<span class="t" style="left:10.00px;top:198.90px;font-size:10.5px;color:#222;letter-spacing:-0.300px;transform:scaleX(0.9696);">Plates</span>
<span class="t" style="left:112.00px;top:198.90px;font-size:10.5px;color:#222;letter-spacing:-0.173px;">0.3 &lt; 5.0%</span>
<svg class="r" style="left:88.6px;top:199.3px;" width="15" height="13" viewBox="0 0 15 13"><path d="M0.8,7.2 L3,5.6 L5.4,8.6 L13,0.6 L14.2,1.8 L5.8,12.6 Z" fill="#5cb865"/></svg>
<span class="t" style="left:10.00px;top:217.40px;font-size:10.5px;color:#222;letter-spacing:-0.173px;">Bolts</span>
<span class="t" style="left:115.00px;top:217.40px;font-size:10.5px;color:#222;letter-spacing:-0.152px;">27.1 &lt; 100%</span>
<svg class="r" style="left:88.6px;top:217.8px;" width="15" height="13" viewBox="0 0 15 13"><path d="M0.8,7.2 L3,5.6 L5.4,8.6 L13,0.6 L14.2,1.8 L5.8,12.6 Z" fill="#5cb865"/></svg>
<span class="t" style="left:10.00px;top:235.90px;font-size:10.5px;color:#222;letter-spacing:-0.111px;">Anchors</span>
<span class="t" style="left:115.00px;top:235.90px;font-size:10.5px;color:#222;letter-spacing:-0.152px;">20.3 &lt; 100%</span>
<svg class="r" style="left:88.6px;top:236.3px;" width="15" height="13" viewBox="0 0 15 13"><path d="M0.8,7.2 L3,5.6 L5.4,8.6 L13,0.6 L14.2,1.8 L5.8,12.6 Z" fill="#5cb865"/></svg>
<span class="t" style="left:10.40px;top:254.40px;font-size:10.5px;color:#222;letter-spacing:-0.300px;transform:scaleX(0.9879);">Welds</span>
<span class="t" style="left:115.00px;top:254.40px;font-size:10.5px;color:#222;letter-spacing:-0.152px;">80.2 &lt; 100%</span>
<svg class="r" style="left:88.6px;top:254.79999999999998px;" width="15" height="13" viewBox="0 0 15 13"><path d="M0.8,7.2 L3,5.6 L5.4,8.6 L13,0.6 L14.2,1.8 L5.8,12.6 Z" fill="#5cb865"/></svg>
<span class="t" style="left:10.00px;top:272.90px;font-size:10.5px;color:#222;letter-spacing:-0.091px;">Concrete block</span>
<span class="t" style="left:115.00px;top:272.90px;font-size:10.5px;color:#222;letter-spacing:-0.152px;">38.1 &lt; 100%</span>
<svg class="r" style="left:88.6px;top:273.29999999999995px;" width="15" height="13" viewBox="0 0 15 13"><path d="M0.8,7.2 L3,5.6 L5.4,8.6 L13,0.6 L14.2,1.8 L5.8,12.6 Z" fill="#5cb865"/></svg>
<span class="t" style="left:10.00px;top:291.40px;font-size:10.5px;color:#222;letter-spacing:-0.178px;">Buckling</span>
<span class="t" style="left:112.00px;top:291.40px;font-size:10.5px;color:#222;letter-spacing:0.008px;">Not calculated</span>
<span class="t" style="left:533.20px;top:180.50px;font-size:10.5px;color:#f26d21;letter-spacing:-0.173px;font-weight:bold;">Production cost</span>
<span class="t" style="left:616.00px;top:180.50px;font-size:10.5px;color:#222;">-</span>
<span class="t" style="left:624.60px;top:180.50px;font-size:10.5px;color:#111;letter-spacing:-0.140px;font-weight:bold;">906</span>
<span class="t" style="left:645.20px;top:180.50px;font-size:10.5px;color:#111;letter-spacing:-0.300px;font-weight:bold;transform:scaleX(0.9406);">US$</span>
<svg class="r" style="left:685px;top:180px;" width="80" height="80" viewBox="0 0 80 80"><ellipse cx="40.2" cy="49" rx="31.3" ry="23.8" fill="none" stroke="#b2b2b2" stroke-width="7.7"/>
<path d="M8,67 L15.6,61 M71.6,66.6 L63.4,60.8" stroke="#444" stroke-width="1.1"/>
<path d="M6.6,68.2 L11,67 L9,64.2 Z M73,67.8 L68.6,66.6 L70.6,63.8 Z" fill="#444"/>
<polygon points="39.9,7.8 66,22 40.5,41 14.5,23.3" fill="#585858"/>
<polygon points="14.5,23.3 40.5,41 40,64.4 17,47.8" fill="#3a3a3a"/>
<polygon points="66,22 40.5,41 40,64.4 64,46.7" fill="#484848"/>
<path d="M39.9,7.8 L66,22 L64,46.7 L40,64.4 L17,47.8 L14.5,23.3 Z M14.5,23.3 L40.5,41 L66,22 M40.5,41 L40,64.4" fill="none" stroke="#2a2a2a" stroke-width="0.8"/>
<path d="M39.9,7.8 L40.2,30 L17,47.8 M40.2,30 L64,46.7" fill="none" stroke="#777" stroke-width="0.5"/>
<text x="37.2" y="27.6" font-size="7" font-weight="bold" fill="#fff" transform="rotate(-32 39 25)">Z</text>
<text x="24.6" y="47.4" font-size="6" font-weight="bold" fill="#fff" transform="rotate(40 27 45)">-X</text>
<text x="49" y="47" font-size="6" font-weight="bold" fill="#fff" transform="rotate(-38 52 45)">-Y</text></svg>
<span class="t" style="left:729.20px;top:267.60px;font-size:12.5px;color:#222;letter-spacing:0.262px;">[ksi]</span>
<svg class="r" style="left:0px;top:0px;pointer-events:none;" width="1280" height="720" viewBox="0 0 1280 720"><rect x="729.4" y="307.50" width="23" height="13.74" fill="#b00000"/><rect x="729.4" y="320.94" width="23" height="13.74" fill="#dc0000"/><rect x="729.4" y="334.37" width="23" height="13.74" fill="#ff0a00"/><rect x="729.4" y="347.81" width="23" height="13.74" fill="#ff4600"/><rect x="729.4" y="361.24" width="23" height="13.74" fill="#ff7a00"/><rect x="729.4" y="374.68" width="23" height="13.74" fill="#ffaa00"/><rect x="729.4" y="388.11" width="23" height="13.74" fill="#ffc800"/><rect x="729.4" y="401.55" width="23" height="13.74" fill="#ffee00"/><rect x="729.4" y="414.98" width="23" height="13.74" fill="#d6e600"/><rect x="729.4" y="428.42" width="23" height="13.74" fill="#80aa00"/><rect x="729.4" y="441.85" width="23" height="13.74" fill="#2a8000"/><rect x="729.4" y="455.29" width="23" height="13.74" fill="#00803c"/><rect x="729.4" y="468.72" width="23" height="13.74" fill="#00b88e"/><rect x="729.4" y="482.16" width="23" height="13.74" fill="#00ecdc"/><rect x="729.4" y="495.59" width="23" height="13.74" fill="#00b8ff"/><rect x="729.4" y="509.03" width="23" height="13.74" fill="#0068ff"/><rect x="729.4" y="522.46" width="23" height="13.74" fill="#0000ff"/><rect x="729.4" y="535.89" width="23" height="13.74" fill="#1c10d6"/><rect x="729.4" y="549.33" width="23" height="13.74" fill="#380ca8"/><rect x="729.4" y="562.77" width="23" height="13.74" fill="#4b0082"/><rect x="729.4" y="307.5" width="23" height="268.7" fill="none" stroke="#222" stroke-width="0.9"/><path d="M723.4,307.50 L729.4,307.50" stroke="#222" stroke-width="1"/><path d="M723.4,337.36 L729.4,337.36" stroke="#222" stroke-width="1"/><path d="M723.4,367.22 L729.4,367.22" stroke="#222" stroke-width="1"/><path d="M723.4,397.08 L729.4,397.08" stroke="#222" stroke-width="1"/><path d="M723.4,426.94 L729.4,426.94" stroke="#222" stroke-width="1"/><path d="M723.4,456.80 L729.4,456.80" stroke="#222" stroke-width="1"/><path d="M723.4,486.66 L729.4,486.66" stroke="#222" stroke-width="1"/><path d="M723.4,516.52 L729.4,516.52" stroke="#222" stroke-width="1"/><path d="M723.4,546.38 L729.4,546.38" stroke="#222" stroke-width="1"/><path d="M723.4,576.24 L729.4,576.24" stroke="#222" stroke-width="1"/></svg>
<span class="t" style="left:689.60px;top:294.90px;font-size:10.5px;color:#222;letter-spacing:-0.009px;">45.00</span>
<span class="t" style="left:695.40px;top:324.76px;font-size:10.5px;color:#222;">40.0</span>
<span class="t" style="left:695.40px;top:354.62px;font-size:10.5px;color:#222;">35.0</span>
<span class="t" style="left:695.40px;top:384.48px;font-size:10.5px;color:#222;">30.0</span>
<span class="t" style="left:695.40px;top:414.34px;font-size:10.5px;color:#222;">25.0</span>
<span class="t" style="left:695.40px;top:444.20px;font-size:10.5px;color:#222;">20.0</span>
<span class="t" style="left:695.40px;top:474.06px;font-size:10.5px;color:#222;">15.0</span>
<span class="t" style="left:695.40px;top:503.92px;font-size:10.5px;color:#222;">10.0</span>
<span class="t" style="left:700.60px;top:533.78px;font-size:10.5px;color:#222;letter-spacing:0.300px;">5.0</span>
<span class="t" style="left:695.40px;top:575.60px;font-size:10.5px;color:#222;">0.00</span>
<svg class="r" id="memberviews" style="left:0;top:0" width="1280" height="720" viewBox="0 0 1280 720">
<defs>
<linearGradient id="tb1" x1="0" y1="0" x2="0" y2="1"><stop offset="0" stop-color="#6f9ede"/><stop offset=".35" stop-color="#b4d2f6"/><stop offset="1" stop-color="#6a98d8"/></linearGradient>
<linearGradient id="gold" x1="0" y1="0" x2="1" y2="0"><stop offset="0" stop-color="#b8900e"/><stop offset=".5" stop-color="#e4bc30"/><stop offset="1" stop-color="#b08a0c"/></linearGradient>
</defs>
<!-- side elevation -->
<g id="view-side">
<rect x="13" y="446.6" width="91.2" height="127.6" fill="#dbdbdb"/>
<rect x="38" y="443.6" width="41" height="3.2" fill="#cfcfcf"/>
<path d="M50.2,326 L50.2,340" stroke="#bcd2ee" stroke-width="0.8" stroke-dasharray="2,1.5"/>
<path d="M112.6,346.6 L119,337.6" stroke="#bcd2ee" stroke-width="0.8" stroke-dasharray="2,1.5"/>
<path d="M114.8,426 L119,426" stroke="#bcd2ee" stroke-width="0.8"/>
<rect x="38" y="340.4" width="24.4" height="78" fill="#7c9ecb"/>
<rect x="79" y="418.4" width="35.8" height="15.8" fill="#7c9ecb"/>
<polygon points="62.4,377.8 77.6,377.8 89.6,388.4 89.6,418.2 62.4,418.2" fill="#2a3c7c"/>
<rect x="38" y="418" width="41" height="25.8" fill="#2a3c7c"/>
<rect x="64" y="440" width="15" height="3.8" fill="#0c1430"/>
<path d="M40,419.2 L60.4,419.2 M49.6,419.6 L49.6,436.6" stroke="#c8c89a" stroke-width="0.9"/>
<rect x="40" y="436.4" width="20.4" height="2.4" fill="#aab49a"/>
<path d="M62.4,378 L62.4,418 M79,418.4 L79,434" stroke="#c8c070" stroke-width="0.6"/>
<g transform="translate(83.2 381.8) rotate(-51.4)">
<rect x="-3" y="-8.2" width="23" height="16.4" fill="#233672"/>
<rect x="0" y="-6" width="41" height="12" fill="url(#tb1)"/>
</g>
<g fill="#f2c21e"><circle cx="76.6" cy="383" r="1.7"/><circle cx="81" cy="386.4" r="1.7"/><circle cx="85.4" cy="389.8" r="1.7"/><circle cx="73.4" cy="387.2" r="1.7"/><circle cx="77.8" cy="390.6" r="1.7"/><circle cx="82.2" cy="394" r="1.7"/><circle cx="70.2" cy="391.4" r="1.7"/><circle cx="74.6" cy="394.8" r="1.7"/><circle cx="79" cy="398.2" r="1.7"/></g>
<rect x="43.6" y="443.8" width="3.6" height="77" fill="url(#gold)"/><rect x="49.8" y="443.8" width="3.6" height="77" fill="url(#gold)"/>
<rect x="37.8" y="520.6" width="21" height="5.4" fill="#cfa61c"/>
</g>
<!-- perspective view -->
<g id="view-3d">
<polygon points="125,537.4 180,497 268,522.6 216.2,565" fill="#e3e3e3"/>
<polygon points="125,537.4 216.2,565 216.2,574.8 125,574.8" fill="#d2d2d2"/>
<polygon points="216.2,565 268,522.6 268,574.8 216.2,574.8" fill="#dcdcdc"/>
<ellipse cx="196" cy="529" rx="30" ry="11" fill="#c9c9ce"/>
<polygon points="148.8,522.6 165,510 174,520 174,540 152.6,542.6" fill="#b8cdea" fill-opacity=".75"/>
<polygon points="227.6,503 260,511.6 256,531 226,524.6" fill="#b8cdea" fill-opacity=".75"/>
<polygon points="172,422.6 187.6,411.6 187.6,491 172,501" fill="#a8bcd8" fill-opacity=".85"/>
<polygon points="187.6,414 195.4,420 195.4,496 187.6,491" fill="#c6d4e8" fill-opacity=".9"/>
<polygon points="195.4,426 210.2,416 210.2,488 195.4,498" fill="#a4b8d4" fill-opacity=".9"/>
<path d="M191.6,404 L191.6,414" stroke="#c4d6ee" stroke-width="0.7" stroke-dasharray="2,1.5"/>
<polygon points="203,461.4 231.2,475 231.2,505 203,496.4" fill="#98a4c2" fill-opacity=".85"/>
<polygon points="164.6,507.6 187.6,490 227.6,500 226,517.6 195,536 165,530" fill="#8d99b9" fill-opacity=".8"/>
<polygon points="195,512 226,500.6 226,517.6 195,536" fill="#7a86a8" fill-opacity=".6"/>
<path d="M164.6,507.6 L187.6,490 L227.6,500 M176,499 L216,509 L195,521 M195,521 L195,536 M165,530 L195,536 L226,517.6 M216,509 L216,523" stroke="#d2c24a" stroke-width="0.9" fill="none"/>
<polygon points="208.8,475 230,453.8 245,466.2 222.6,490" fill="#9aa4c4" fill-opacity=".85"/>
<g transform="translate(221 467.4) rotate(-40)"><rect x="0" y="-6.4" width="40" height="12.8" rx="3" fill="#a9c9f2" fill-opacity=".9"/><ellipse cx="38.6" cy="0" rx="3" ry="6.4" fill="#c3dbf8"/><rect x="0" y="-6.4" width="40" height="3" fill="#8ab0e6" fill-opacity=".6"/></g>
<g fill="#e0ae1c"><circle cx="213.4" cy="473.4" r="2"/><circle cx="217.6" cy="476.8" r="2"/><circle cx="222" cy="480.2" r="2"/><circle cx="216.4" cy="478.4" r="2"/><circle cx="220.6" cy="481.8" r="2"/><circle cx="225" cy="485.2" r="2"/><circle cx="219" cy="470" r="2"/><circle cx="223.4" cy="473.4" r="2"/><circle cx="227.6" cy="477" r="2"/></g>
<rect x="178" y="522" width="3.6" height="52.8" fill="url(#gold)"/><rect x="194.4" y="516" width="3.6" height="58.8" fill="url(#gold)"/>
<circle cx="179.8" cy="521.4" r="2.6" fill="#9a7a10"/><circle cx="196.2" cy="514.6" r="2.6" fill="#8a6e10"/>
</g>
</svg>
<svg class="r" id="stressplot" style="left:0;top:0" width="1280" height="720" viewBox="0 0 1280 720"><defs><linearGradient id="g1" gradientUnits="userSpaceOnUse" x1="568" y1="555" x2="442" y2="643"><stop offset="0.000" stop-color="#4b0082"/><stop offset="1.000" stop-color="#4b0082"/><stop offset="1.000" stop-color="#4b0082"/></linearGradient><clipPath id="c2"><polygon points="568.5,554.5 442.7,643.6 380.0,601.0 506.0,512.0"/></clipPath><linearGradient id="g3" gradientUnits="userSpaceOnUse" x1="526" y1="0" x2="563" y2="0"><stop offset="0.000" stop-color="#0000ff"/><stop offset="0.180" stop-color="#0000ff"/><stop offset="0.180" stop-color="#0068ff"/><stop offset="0.360" stop-color="#0068ff"/><stop offset="0.360" stop-color="#00b8ff"/><stop offset="0.860" stop-color="#00b8ff"/><stop offset="0.860" stop-color="#00ecdc"/></linearGradient><radialGradient id="g4" gradientUnits="userSpaceOnUse" cx="563" cy="489" r="30" gradientTransform="translate(563 489) scale(0.75 1) translate(-563 -489)"><stop offset="0.000" stop-color="#ff0a00"/><stop offset="0.120" stop-color="#ff0a00"/><stop offset="0.120" stop-color="#ff7a00"/><stop offset="0.200" stop-color="#ff7a00"/><stop offset="0.200" stop-color="#ffc800"/><stop offset="0.280" stop-color="#ffc800"/><stop offset="0.280" stop-color="#ffee00"/><stop offset="0.360" stop-color="#ffee00"/><stop offset="0.360" stop-color="#80aa00"/><stop offset="0.460" stop-color="#80aa00"/><stop offset="0.460" stop-color="#2a8000"/><stop offset="0.600" stop-color="#2a8000"/><stop offset="0.600" stop-color="#00803c"/><stop offset="0.740" stop-color="#00803c"/><stop offset="0.740" stop-color="#00b88e"/><stop offset="0.860" stop-color="#00b88e"/><stop offset="0.860" stop-color="#00ecdc"/><stop offset="1.000" stop-color="#00ecdc"/><stop offset="1.000" stop-color="#fff" stop-opacity="0"/></radialGradient><clipPath id="c5"><polygon points="526.6,515.1 562.4,490.0 562.4,550.7 526.6,525.4"/></clipPath><clipPath id="c6"><polygon points="526.6,515.1 562.4,490.0 562.4,550.7 526.6,525.4"/></clipPath><linearGradient id="g7" gradientUnits="userSpaceOnUse" x1="495" y1="540" x2="521" y2="522"><stop offset="0.000" stop-color="#00b88e"/><stop offset="0.200" stop-color="#00b88e"/><stop offset="0.200" stop-color="#00ecdc"/><stop offset="0.550" stop-color="#00ecdc"/><stop offset="0.550" stop-color="#00b88e"/><stop offset="0.750" stop-color="#00b88e"/><stop offset="0.750" stop-color="#2a8000"/><stop offset="0.900" stop-color="#2a8000"/><stop offset="0.900" stop-color="#00ecdc"/></linearGradient><linearGradient id="g8" gradientUnits="userSpaceOnUse" x1="459" y1="0" x2="495" y2="0"><stop offset="0.000" stop-color="#1c10d6"/><stop offset="0.200" stop-color="#1c10d6"/><stop offset="0.200" stop-color="#0000ff"/><stop offset="0.420" stop-color="#0000ff"/><stop offset="0.420" stop-color="#0068ff"/><stop offset="0.620" stop-color="#0068ff"/><stop offset="0.620" stop-color="#00b8ff"/><stop offset="0.800" stop-color="#00b8ff"/><stop offset="0.800" stop-color="#00ecdc"/><stop offset="0.930" stop-color="#00ecdc"/><stop offset="0.930" stop-color="#00b8ff"/></linearGradient><clipPath id="c9"><polygon points="459.0,562.7 495.0,537.4 495.0,598.5 459.0,574.0"/></clipPath><linearGradient id="g10" gradientUnits="userSpaceOnUse" x1="406" y1="560" x2="445" y2="600"><stop offset="0.000" stop-color="#380ca8"/><stop offset="0.450" stop-color="#380ca8"/><stop offset="0.450" stop-color="#4b0082"/><stop offset="1.000" stop-color="#4b0082"/><stop offset="1.000" stop-color="#4b0082"/></linearGradient><linearGradient id="g11" gradientUnits="userSpaceOnUse" x1="294" y1="670" x2="430" y2="611"><stop offset="0.000" stop-color="#4b0082"/><stop offset="0.400" stop-color="#4b0082"/><stop offset="0.460" stop-color="#380ca8"/><stop offset="0.700" stop-color="#380ca8"/><stop offset="0.780" stop-color="#1c10d6"/><stop offset="1.000" stop-color="#1c10d6"/></linearGradient><linearGradient id="g12" gradientUnits="userSpaceOnUse" x1="294" y1="650" x2="430" y2="575"><stop offset="0.000" stop-color="#380ca8"/><stop offset="0.120" stop-color="#1c10d6"/><stop offset="0.600" stop-color="#1c10d6"/><stop offset="0.700" stop-color="#380ca8"/><stop offset="1.000" stop-color="#4b0082"/></linearGradient><linearGradient id="g13" gradientUnits="userSpaceOnUse" x1="268" y1="606" x2="430" y2="560"><stop offset="0.000" stop-color="#4b0082"/><stop offset="0.560" stop-color="#4b0082"/><stop offset="0.660" stop-color="#41069a"/><stop offset="0.800" stop-color="#380ca8"/><stop offset="0.880" stop-color="#4b0082"/><stop offset="1.000" stop-color="#4b0082"/></linearGradient><linearGradient id="g14" gradientUnits="userSpaceOnUse" x1="568" y1="486" x2="470" y2="555"><stop offset="0.000" stop-color="#2a8000"/><stop offset="0.160" stop-color="#2a8000"/><stop offset="0.160" stop-color="#00803c"/><stop offset="0.240" stop-color="#00803c"/><stop offset="0.240" stop-color="#00b88e"/><stop offset="0.300" stop-color="#00b88e"/><stop offset="0.300" stop-color="#00ecdc"/><stop offset="0.360" stop-color="#00ecdc"/><stop offset="0.360" stop-color="#00b8ff"/><stop offset="0.420" stop-color="#00b8ff"/><stop offset="0.420" stop-color="#0068ff"/><stop offset="0.500" stop-color="#0068ff"/><stop offset="0.500" stop-color="#0000ff"/><stop offset="0.600" stop-color="#0000ff"/><stop offset="0.600" stop-color="#1c10d6"/><stop offset="0.700" stop-color="#1c10d6"/><stop offset="0.700" stop-color="#380ca8"/><stop offset="0.760" stop-color="#380ca8"/><stop offset="0.760" stop-color="#4b0082"/></linearGradient><radialGradient id="g15" gradientUnits="userSpaceOnUse" cx="568.3" cy="485.8" r="34" gradientTransform="translate(568.3 485.8) rotate(-35) scale(1 0.55) rotate(35) translate(-568.3 -485.8)"><stop offset="0.000" stop-color="#ff0a00"/><stop offset="0.100" stop-color="#ff0a00"/><stop offset="0.100" stop-color="#ff7a00"/><stop offset="0.180" stop-color="#ff7a00"/><stop offset="0.180" stop-color="#ffc800"/><stop offset="0.260" stop-color="#ffc800"/><stop offset="0.260" stop-color="#ffee00"/><stop offset="0.340" stop-color="#ffee00"/><stop offset="0.340" stop-color="#80aa00"/><stop offset="0.440" stop-color="#80aa00"/><stop offset="0.440" stop-color="#2a8000"/><stop offset="0.800" stop-color="#2a8000"/><stop offset="0.800" stop-color="#00803c"/><stop offset="1.000" stop-color="#00803c"/><stop offset="1.000" stop-color="#fff" stop-opacity="0"/></radialGradient><clipPath id="c16"><polygon points="528.4,459.0 568.3,485.8 443.5,573.6 403.6,546.8"/></clipPath><clipPath id="c17"><polygon points="528.4,459.0 568.3,485.8 443.5,573.6 403.6,546.8"/></clipPath><linearGradient id="g18" gradientUnits="userSpaceOnUse" x1="457" y1="0" x2="528" y2="0"><stop offset="0.000" stop-color="#380ca8"/><stop offset="0.450" stop-color="#380ca8"/><stop offset="0.500" stop-color="#1c10d6"/><stop offset="1.000" stop-color="#1c10d6"/></linearGradient><clipPath id="c19"><polygon points="457.2,267.0 528.4,216.5 528.4,459.0 457.2,509.5"/></clipPath><linearGradient id="g20" gradientUnits="userSpaceOnUse" x1="489" y1="0" x2="528" y2="0"><stop offset="0.000" stop-color="#4b0082"/><stop offset="0.220" stop-color="#4b0082"/><stop offset="0.300" stop-color="#380ca8"/><stop offset="1.000" stop-color="#380ca8"/></linearGradient><linearGradient id="g21" gradientUnits="userSpaceOnUse" x1="528.4" y1="250" x2="566.5" y2="251.5"><stop offset="0.000" stop-color="#1c10d6"/><stop offset="0.020" stop-color="#1c10d6"/><stop offset="0.020" stop-color="#0000ff"/><stop offset="0.300" stop-color="#0000ff"/><stop offset="0.300" stop-color="#0068ff"/><stop offset="0.570" stop-color="#0068ff"/><stop offset="0.570" stop-color="#00b8ff"/><stop offset="0.840" stop-color="#00b8ff"/><stop offset="0.840" stop-color="#00ecdc"/><stop offset="1.160" stop-color="#00ecdc"/><stop offset="1.160" stop-color="#00b88e"/></linearGradient><clipPath id="c22"><polygon points="528.4,216.5 566.5,243.1 566.5,485.8 528.4,459.0"/></clipPath><radialGradient id="g23" gradientUnits="userSpaceOnUse" cx="566.5" cy="481" r="42" gradientTransform="translate(566.5 481) scale(0.52 1) translate(-566.5 -481)"><stop offset="0.000" stop-color="#dc0000"/><stop offset="0.100" stop-color="#dc0000"/><stop offset="0.100" stop-color="#ff0a00"/><stop offset="0.180" stop-color="#ff0a00"/><stop offset="0.180" stop-color="#ff4600"/><stop offset="0.260" stop-color="#ff4600"/><stop offset="0.260" stop-color="#ff7a00"/><stop offset="0.330" stop-color="#ff7a00"/><stop offset="0.330" stop-color="#ffc800"/><stop offset="0.400" stop-color="#ffc800"/><stop offset="0.400" stop-color="#ffee00"/><stop offset="0.470" stop-color="#ffee00"/><stop offset="0.470" stop-color="#d6e600"/><stop offset="0.550" stop-color="#d6e600"/><stop offset="0.550" stop-color="#80aa00"/><stop offset="0.640" stop-color="#80aa00"/><stop offset="0.640" stop-color="#2a8000"/><stop offset="0.820" stop-color="#2a8000"/><stop offset="0.820" stop-color="#00803c"/><stop offset="1.000" stop-color="#00803c"/><stop offset="1.000" stop-color="#fff" stop-opacity="0"/></radialGradient><clipPath id="c24"><polygon points="528.4,216.5 566.5,243.1 566.5,485.8 528.4,459.0"/></clipPath><linearGradient id="g25" gradientUnits="userSpaceOnUse" x1="419" y1="0" x2="496" y2="0"><stop offset="0.000" stop-color="#1c10d6"/><stop offset="0.120" stop-color="#1c10d6"/><stop offset="0.120" stop-color="#380ca8"/><stop offset="0.240" stop-color="#380ca8"/><stop offset="0.240" stop-color="#4b0082"/><stop offset="0.420" stop-color="#4b0082"/><stop offset="0.420" stop-color="#380ca8"/><stop offset="0.560" stop-color="#380ca8"/><stop offset="0.560" stop-color="#1c10d6"/><stop offset="0.660" stop-color="#1c10d6"/><stop offset="0.660" stop-color="#0000ff"/><stop offset="0.750" stop-color="#0000ff"/><stop offset="0.750" stop-color="#0068ff"/><stop offset="0.840" stop-color="#0068ff"/><stop offset="0.840" stop-color="#00b8ff"/><stop offset="0.920" stop-color="#00b8ff"/><stop offset="0.920" stop-color="#00ecdc"/></linearGradient><linearGradient id="g26" gradientUnits="userSpaceOnUse" x1="370" y1="0" x2="456" y2="0"><stop offset="0.000" stop-color="#1c10d6"/><stop offset="0.120" stop-color="#0000ff"/><stop offset="0.740" stop-color="#0000ff"/><stop offset="0.840" stop-color="#1c10d6"/><stop offset="1.000" stop-color="#1c10d6"/></linearGradient><clipPath id="c27"><polygon points="455.5,383.5 456.5,509.0 370.3,567.5 370.3,441.0 419.2,408.5"/></clipPath><clipPath id="c28"><polygon points="457.5,509.0 495.8,535.8 443.5,573.6 406.7,547.5"/></clipPath><linearGradient id="g29" gradientUnits="userSpaceOnUse" x1="349" y1="339" x2="330" y2="420"><stop offset="0.000" stop-color="#4b0082"/><stop offset="0.280" stop-color="#4b0082"/><stop offset="0.340" stop-color="#380ca8"/><stop offset="1.000" stop-color="#380ca8"/></linearGradient><clipPath id="c30"><polygon points="349.7,339.4 289.3,383.0 300.0,422.0 380.0,446.0 419.0,421.0 419.0,387.5"/></clipPath><linearGradient id="g31" gradientUnits="userSpaceOnUse" x1="289" y1="437" x2="370" y2="440"><stop offset="0.000" stop-color="#4b0082"/><stop offset="0.200" stop-color="#380ca8"/><stop offset="1.000" stop-color="#380ca8"/></linearGradient><linearGradient id="g32" gradientUnits="userSpaceOnUse" x1="357.95" y1="427.1" x2="427.05" y2="469.6"><stop offset="0.000" stop-color="#380ca8"/><stop offset="0.160" stop-color="#380ca8"/><stop offset="0.240" stop-color="#1c10d6"/><stop offset="0.300" stop-color="#0000ff"/><stop offset="0.325" stop-color="#0068ff"/><stop offset="0.340" stop-color="#00b8ff"/><stop offset="0.350" stop-color="#00ecdc"/><stop offset="0.360" stop-color="#2a8000"/><stop offset="0.370" stop-color="#ffee00"/><stop offset="0.380" stop-color="#ffaa00"/><stop offset="0.390" stop-color="#ff4600"/><stop offset="0.405" stop-color="#dc0000"/><stop offset="0.490" stop-color="#ff0a00"/><stop offset="0.520" stop-color="#ff4600"/><stop offset="0.540" stop-color="#ffaa00"/><stop offset="0.555" stop-color="#ffee00"/><stop offset="0.575" stop-color="#80aa00"/><stop offset="0.600" stop-color="#2a8000"/><stop offset="0.670" stop-color="#00803c"/><stop offset="0.730" stop-color="#00b88e"/><stop offset="0.780" stop-color="#00ecdc"/><stop offset="0.830" stop-color="#00b8ff"/><stop offset="0.875" stop-color="#0068ff"/><stop offset="0.920" stop-color="#1c10d6"/><stop offset="0.960" stop-color="#380ca8"/></linearGradient><clipPath id="c33"><polygon points="379.2,396.7 448.3,439.2 405.8,500.0 336.7,457.5"/></clipPath><clipPath id="c34"><path d="M324.5,379.7 L396.8,422.7 A25.0,25.0 0 0 1 370.4,465.1 L299.9,419.5 A23.4,23.4 0 0 1 324.5,379.7 Z"/></clipPath></defs><polygon points="568.5,554.5 442.7,643.6 380.0,601.0 506.0,512.0" fill="url(#g1)" stroke="#0a0a14" stroke-width="0.7" stroke-linejoin="round" /><g clip-path="url(#c2)"><ellipse cx="506" cy="580" rx="66" ry="27" transform="rotate(-35 506 580)" fill="#380ca8"/><ellipse cx="512" cy="572" rx="52" ry="20" transform="rotate(-35 512 572)" fill="#1c10d6"/><ellipse cx="530" cy="548" rx="16" ry="6" transform="rotate(-35 530 548)" fill="#0000ff"/><ellipse cx="505" cy="581" rx="12" ry="5" transform="rotate(-35 505 581)" fill="#0000ff"/><ellipse cx="462" cy="610" rx="28" ry="13" transform="rotate(-35 462 610)" fill="#380ca8"/></g><ellipse cx="508.2" cy="570" rx="10" ry="7.2" fill="#fff"/><polygon points="526.6,515.1 562.4,490.0 562.4,550.7 526.6,525.4" fill="url(#g3)" stroke="#0a0a14" stroke-width="0.7" stroke-linejoin="round" /><g clip-path="url(#c5)"><rect x="503" y="399" width="120" height="180" fill="url(#g4)"/></g><g clip-path="url(#c6)"><ellipse cx="540" cy="527" rx="7" ry="4" fill="#0000ff"/><ellipse cx="560" cy="549" rx="6" ry="7" fill="#00b88e"/></g><polyline points="562.4,490.0 562.4,550.7 526.6,525.4 526.6,515.1" fill="none" stroke="#0a0a14" stroke-width="0.7"/><polygon points="495.0,537.4 526.6,515.1 526.6,525.4 495.0,547.5" fill="url(#g7)" stroke="#0a0a14" stroke-width="0.7" stroke-linejoin="round" /><polygon points="459.0,562.7 495.0,537.4 495.0,598.5 459.0,574.0" fill="url(#g8)" stroke="#0a0a14" stroke-width="0.7" stroke-linejoin="round" /><g clip-path="url(#c9)"><ellipse cx="493" cy="540" rx="4" ry="9" fill="#00803c"/><ellipse cx="491" cy="594" rx="6" ry="8" fill="#00ecdc"/></g><polyline points="495.0,537.4 495.0,598.5 459.0,574.0 459.0,562.7" fill="none" stroke="#0a0a14" stroke-width="0.7"/><polygon points="445.0,574.6 459.0,563.4 459.0,574.0 445.0,586.0" fill="#1c10d6"  /><polygon points="457.0,563.6 460.0,562.0 460.0,575.0 457.0,575.0" fill="#4b0082"  /><polygon points="406.7,547.5 443.5,573.6 445.0,636.3 407.0,610.0" fill="url(#g10)" stroke="#0a0a14" stroke-width="0.7" stroke-linejoin="round" /><polygon points="443.5,573.6 446.4,571.6 446.4,634.6 445.0,636.3" fill="#380ca8"  /><polyline points="443.9,573.6 445.0,636.3" fill="none" stroke="#0a0a14" stroke-width="0.9"/><polygon points="294.0,669.5 320.0,688.5 414.4,623.3 429.7,611.0 405.2,592.0" fill="url(#g11)" stroke="#0a0a14" stroke-width="0.7" stroke-linejoin="round" /><ellipse cx="418" cy="609" rx="9" ry="4" transform="rotate(-35 418 609)" fill="#0068ff"/><ellipse cx="420" cy="609" rx="5" ry="2.2" transform="rotate(-35 420 609)" fill="#00b8ff"/><polygon points="294.0,622.8 320.0,642.4 429.2,565.8 429.2,577.0 405.2,592.0 294.0,669.5" fill="url(#g12)" stroke="#0a0a14" stroke-width="0.7" stroke-linejoin="round" /><polyline points="405.2,592.0 429.7,611.0" fill="none" stroke="#0a0a14" stroke-width="0.7"/><polygon points="405.0,580.4 408.0,582.4 408.0,594.0 405.0,592.0" fill="#4b0082"  /><polygon points="268.8,606.0 320.0,642.4 429.2,565.8 406.7,547.5 372.0,520.0 370.3,533.4" fill="url(#g13)" stroke="#0a0a14" stroke-width="0.7" stroke-linejoin="round" /><polyline points="294.0,622.8 406.7,547.5" fill="none" stroke="#0a0a14" stroke-width="0.7"/><polyline points="294.0,622.8 294.0,669.5" fill="none" stroke="#0a0a14" stroke-width="0.8"/><polygon points="528.4,459.0 568.3,485.8 443.5,573.6 403.6,546.8" fill="url(#g14)" stroke="#0a0a14" stroke-width="0.7" stroke-linejoin="round" /><g clip-path="url(#c16)"><rect x="500.29999999999995" y="383.8" width="136" height="204" fill="url(#g15)"/></g><g clip-path="url(#c17)"><polygon points="528.4,459 536,464 512,500 496,520 496,482" fill="#0068ff"/><polygon points="528.4,459 531,461 505,492 496,494 496,482" fill="#00b8ff"/><polygon points="496,498 520,494 536,512 500,536 490,530" fill="#1c10d6"/></g><polygon points="528.4,459.0 568.3,485.8 443.5,573.6 403.6,546.8" fill="none" stroke="#0a0a14" stroke-width="0.7" stroke-linejoin="round" /><polygon points="457.2,267.0 528.4,216.5 528.4,459.0 457.2,509.5" fill="url(#g18)" stroke="#0a0a14" stroke-width="0.7" stroke-linejoin="round" /><g clip-path="url(#c19)"><polygon points="528.4,410 512,424 506,448 496,462 496,500 528.4,470" fill="#0000ff"/><polygon points="496,470 528.4,447 528.4,462 496,486" fill="#0068ff"/><polygon points="496,478 520,461 528.4,459 496,484" fill="#00b8ff"/></g><polygon points="457.2,267.0 528.4,216.5 528.4,459.0 457.2,509.5" fill="none" stroke="#0a0a14" stroke-width="0.7" stroke-linejoin="round" /><polygon points="489.4,189.3 528.4,216.5 489.4,244.2" fill="url(#g20)" stroke="#0a0a14" stroke-width="0.7" stroke-linejoin="round" /><polygon points="528.4,216.5 566.5,243.1 566.5,485.8 528.4,459.0" fill="url(#g21)" stroke="#0a0a14" stroke-width="0.7" stroke-linejoin="round" /><g clip-path="url(#c22)"><path d="M566.5,385 C560,395 559,410 556,425 C552,445 540,455 528.4,462 L528.4,490 L566.5,490 Z" fill="#00b88e"/><path d="M566.5,410 C562,420 560,432 556,442 C551,455 544,462 536,466 L536,490 L566.5,490 Z" fill="#00803c"/><path d="M528.4,400 C532,420 531,440 528.4,450 Z" fill="#0000ff"/></g><g clip-path="url(#c24)"><rect x="482.5" y="355" width="168" height="252" fill="url(#g23)"/></g><polygon points="528.4,216.5 566.5,243.1 566.5,485.8 528.4,459.0" fill="none" stroke="#0a0a14" stroke-width="0.7" stroke-linejoin="round" /><polyline points="528.4,216.5 528.4,459.0" fill="none" stroke="#0a0a14" stroke-width="0.8"/><polygon points="418.8,239.4 496.0,293.8 495.8,535.8 419.0,482.0" fill="url(#g25)" stroke="#0a0a14" stroke-width="0.7" stroke-linejoin="round" /><polyline points="457.4,267.0 457.4,509.0" fill="none" stroke="#0a0a14" stroke-width="0.9"/><polygon points="455.5,383.5 456.5,509.0 370.3,567.5 370.3,441.0 419.2,408.5" fill="url(#g26)" stroke="#0a0a14" stroke-width="0.7" stroke-linejoin="round" /><g clip-path="url(#c27)"><polygon points="419.2,408.5 443,392 447,422 455,446 420,500 400,512 384,504 372,486" fill="#0068ff"/><polygon points="419.2,408.5 439,394.8 443,422 451.5,442 416,496 398,505 380,494" fill="#00b8ff"/><polygon points="419.2,408.5 434.5,398 438,420 446,438 411,493 403,497 384,490" fill="#00ecdc"/><polygon points="419.2,408.5 429,401.6 432,417 424,426" fill="#00b88e"/><polygon points="445,400 452,395 453,462 446,456" fill="#380ca8"/><polygon points="370.3,522 392,526 420,514 456,492 456.5,509 370.3,567.5" fill="#1c10d6"/><polygon points="370.3,545 384,548 400,540 400,547 370.3,567.5" fill="#380ca8"/></g><polygon points="455.5,383.5 456.5,509.0 370.3,567.5 370.3,441.0 419.2,408.5" fill="none" stroke="#0a0a14" stroke-width="0.7" stroke-linejoin="round" /><polygon points="455.2,383.5 457.6,381.6 457.6,508.0 455.2,509.6" fill="#24007a"  /><polyline points="372.0,571.5 457.5,511.6" fill="none" stroke="#0a0a14" stroke-width="0.6"/><polygon points="370.3,567.5 456.5,509.0 457.5,511.6 372.0,571.5" fill="#0000ff"  /><polyline points="370.3,567.5 456.5,509.0" fill="none" stroke="#0a0a14" stroke-width="0.7"/><polygon points="457.5,509.0 495.8,535.8 443.5,573.6 406.7,547.5" fill="#4b0082" stroke="#0a0a14" stroke-width="0.7" stroke-linejoin="round" /><g clip-path="url(#c28)"><polygon points="470,517 495.8,535.8 480,547 468,540" fill="#380ca8"/></g><polygon points="457.5,509.0 495.8,535.8 443.5,573.6 406.7,547.5" fill="none" stroke="#0a0a14" stroke-width="0.7" stroke-linejoin="round" /><polygon points="349.7,339.4 289.3,383.0 300.0,422.0 380.0,446.0 419.0,421.0 419.0,387.5" fill="url(#g29)"  /><g clip-path="url(#c30)"><polygon points="318,362 323,359 400,410 394,413" fill="#1c10d6"/><polygon points="380,385 419,392 419,421 400,412" fill="#1c10d6"/></g><polyline points="289.3,383.0 349.7,339.4 419.0,387.8" fill="none" stroke="#0a0a14" stroke-width="0.8"/><polyline points="319.0,362.3 386.0,407.0" fill="none" stroke="#0a0a14" stroke-width="0.6"/><polyline points="323.0,359.6 390.0,404.4" fill="none" stroke="#0a0a14" stroke-width="0.6"/><polygon points="289.0,437.5 326.0,412.0 384.0,444.0 370.3,496.0" fill="url(#g31)"  /><polyline points="312.0,421.0 289.0,437.5 370.3,496.0" fill="none" stroke="#0a0a14" stroke-width="0.8"/><polygon points="379.2,396.7 448.3,439.2 405.8,500.0 336.7,457.5" fill="url(#g32)" stroke="#0a0a14" stroke-width="0.7" stroke-linejoin="round" /><g clip-path="url(#c33)"><ellipse cx="414" cy="434" rx="2.4" ry="2" fill="#0068ff" opacity="0.9"/><ellipse cx="431.7" cy="446.7" rx="2.4" ry="2" fill="#00b8ff" opacity="0.9"/><ellipse cx="408.3" cy="460.8" rx="2.4" ry="2" fill="#0068ff" opacity="0.9"/><ellipse cx="418.3" cy="465.8" rx="2.4" ry="2" fill="#00b8ff" opacity="0.9"/><ellipse cx="425" cy="453" rx="2.4" ry="2" fill="#0068ff" opacity="0.9"/><ellipse cx="387.5" cy="473.3" rx="2.4" ry="2" fill="#00b8ff" opacity="0.9"/><ellipse cx="396.7" cy="480" rx="2.4" ry="2" fill="#0068ff" opacity="0.9"/><ellipse cx="405" cy="485" rx="2.4" ry="2" fill="#00b8ff" opacity="0.9"/><ellipse cx="399" cy="467" rx="2.4" ry="2" fill="#0068ff" opacity="0.9"/></g><path d="M324.5,379.7 L396.8,422.7 A25.0,25.0 0 0 1 370.4,465.1 L299.9,419.5 A23.4,23.4 0 0 1 324.5,379.7 Z" fill="#0b6cf0"/><g clip-path="url(#c34)"><ellipse cx="372" cy="441" rx="30" ry="23" transform="rotate(32 372 441)" fill="#1a14c4"/><path d="M386,420 a26,26 0 0 1 0,50 l-14,0 a30,30 0 0 0 0,-50 z" fill="#1a14c4"/><ellipse cx="392" cy="452" rx="14" ry="12" fill="#3a10a4" opacity="0.8"/><path d="M328,383 a23,23 0 0 1 -6,36 a34,34 0 0 0 6,-36 z" fill="#1a14c4"/><path d="M301.4,360.0 L423.8,436.0 M300.3,361.9 L422.7,437.8 M299.2,363.7 L421.6,439.6 M298.0,365.5 L420.4,441.4 M296.9,367.3 L419.3,443.3 M295.8,369.2 L418.2,445.1 M294.6,371.0 L417.0,446.9 M293.5,372.8 L415.9,448.8 M292.4,374.6 L414.8,450.6 M291.2,376.5 L413.6,452.4 M290.1,378.3 L412.5,454.2 M289.0,380.1 L411.4,456.1 M287.8,382.0 L410.2,457.9 M286.7,383.8 L409.1,459.7 M285.6,385.6 L408.0,461.5 M284.4,387.4 L406.8,463.4 M283.3,389.3 L405.7,465.2 M282.2,391.1 L404.6,467.0 M281.0,392.9 L403.4,468.9 M279.9,394.7 L402.3,470.7 M278.8,396.6 L401.2,472.5 M277.6,398.4 L400.0,474.3 M276.5,400.2 L398.9,476.2 M275.4,402.1 L397.8,478.0 M274.2,403.9 L396.6,479.8 M273.1,405.7 L395.5,481.6 M272.0,407.5 L394.4,483.5" stroke="#020a24" stroke-width="0.85" fill="none"/></g><circle cx="312.2" cy="399.6" r="23.4" fill="none" stroke="#061430" stroke-width="0.7" opacity="0.85"/><path d="M324.5,379.7 L396.8,422.7 A25.0,25.0 0 0 1 370.4,465.1 L299.9,419.5 A23.4,23.4 0 0 1 324.5,379.7 Z" fill="none" stroke="#061430" stroke-width="0.8"/><path d="M353.5,397.2 L396.6,422.8 M338.8,444.4 L371,465.4" stroke="#18b8a8" stroke-width="1.8" stroke-dasharray="1.4,1.1" fill="none" opacity="0.8"/><rect x="491" y="192.8" width="3" height="16" fill="#7dfc00"/><path d="M490.6,192.8 L490.6,208.8" stroke="#0a2a00" stroke-width="0.8"/><path d="M478.6,201.8 L482.6,201.6 C480.6,207 482.6,211 490,213.6 L497.6,215.6 L494,219 L487,218.6 C479,215.6 476.6,209 478.6,201.8 Z" fill="#7dfc00" stroke="#0a2a00" stroke-width="0.7" stroke-linejoin="round"/><g transform="translate(491 231.6) scale(1.0)"><path d="M-5.9,-4.1 A7.2,7.2 0 1 1 -5.5,4.6" fill="none" stroke="#0a2a00" stroke-width="4.6"/><path d="M-5.9,-4.1 A7.2,7.2 0 1 1 -5.5,4.6" fill="none" stroke="#7dfc00" stroke-width="3.4"/><polygon transform="rotate(178)" points="15,0 6.2,-6.2 7.8,-2 2.4,-2.4 2.4,2.4 7.8,2 6.2,6.2" fill="#7dfc00" stroke="#0a2a00" stroke-width="0.7" stroke-linejoin="round"/><polygon transform="rotate(128)" points="15,0 6.2,-6.2 7.8,-2 2.4,-2.4 2.4,2.4 7.8,2 6.2,6.2" fill="#7dfc00" stroke="#0a2a00" stroke-width="0.7" stroke-linejoin="round"/><polygon transform="rotate(38)" points="15,0 6.2,-6.2 7.8,-2 2.4,-2.4 2.4,2.4 7.8,2 6.2,6.2" fill="#7dfc00" stroke="#0a2a00" stroke-width="0.7" stroke-linejoin="round"/><circle cx="0.4" cy="1" r="1.5" fill="#1a1060"/></g><path d="M271.4,355.4 L277.8,356.6 L276,358.6 L293,384.4 L296.8,386.6 L297.2,390.4 L293.2,391 L290.6,388 L273.6,361.2 L271.6,362 Z" fill="#7dfc00"/><path d="M273.4,367.6 C276,372.6 280,373.6 285.6,370.6 C290,368 292.6,364.6 294.6,360.6 L296,363 C294,369 289,373.6 282.6,375.6 C277,376.6 274,373 273.4,367.6 Z" fill="#86d84a" stroke="#0a2a00" stroke-width="0.7" stroke-linejoin="round"/><g transform="translate(284 655.4) scale(0.98)"><path d="M6.2,3.6 A7.2,7.2 0 1 1 6.2,-3.6" fill="none" stroke="#0a2a00" stroke-width="4.6"/><path d="M6.2,3.6 A7.2,7.2 0 1 1 6.2,-3.6" fill="none" stroke="#7dfc00" stroke-width="3.4"/><polygon transform="rotate(8)" points="15,0 6.2,-6.2 7.8,-2 2.4,-2.4 2.4,2.4 7.8,2 6.2,6.2" fill="#7dfc00" stroke="#0a2a00" stroke-width="0.7" stroke-linejoin="round"/><polygon transform="rotate(118)" points="15,0 6.2,-6.2 7.8,-2 2.4,-2.4 2.4,2.4 7.8,2 6.2,6.2" fill="#7dfc00" stroke="#0a2a00" stroke-width="0.7" stroke-linejoin="round"/><polygon transform="rotate(232)" points="15,0 6.2,-6.2 7.8,-2 2.4,-2.4 2.4,2.4 7.8,2 6.2,6.2" fill="#7dfc00" stroke="#0a2a00" stroke-width="0.7" stroke-linejoin="round"/><circle cx="0.4" cy="1" r="1.5" fill="#1a1060"/></g><path d="M243,664.6 C252,660.6 262,662.6 268,668.6 C271,672.6 271.6,676.6 270,680.6 L266.6,677 C267,672.6 263,668.6 256,667.6 C251,667 247,668 243,670 Z" fill="#7dfc00" stroke="#0a2a00" stroke-width="0.7" stroke-linejoin="round"/><rect x="493" y="175.4" width="37" height="12.4" fill="#9d9d9d" fill-opacity="0.6"/><text x="511.5" y="184.9" font-size="10.4" text-anchor="middle" fill="#222" fill-opacity="0.85" textLength="33.0" lengthAdjust="spacingAndGlyphs">-72.633</text><rect x="500.9" y="201" width="26" height="11.8" fill="#9d9d9d" fill-opacity="0.6"/><text x="513.9" y="209.9" font-size="10.4" text-anchor="middle" fill="#222" fill-opacity="0.85" textLength="22.0" lengthAdjust="spacingAndGlyphs">-0.02</text><rect x="485" y="208.2" width="27.8" height="11.2" fill="#9d9d9d" fill-opacity="0.6"/><text x="498.9" y="216.5" font-size="10.4" text-anchor="middle" fill="#222" fill-opacity="0.85" textLength="23.8" lengthAdjust="spacingAndGlyphs">30.07</text><rect x="512.8" y="207.4" width="30" height="12" fill="#9d9d9d" fill-opacity="0.6"/><text x="527.8" y="216.5" font-size="10.4" text-anchor="middle" fill="#222" fill-opacity="0.85" textLength="26.0" lengthAdjust="spacingAndGlyphs">1.081</text><rect x="485" y="219.4" width="26.7" height="12.3" fill="#9d9d9d" fill-opacity="0.6"/><text x="498.4" y="228.8" font-size="10.4" text-anchor="middle" fill="#222" fill-opacity="0.85" textLength="22.7" lengthAdjust="spacingAndGlyphs">-7.62</text><rect x="511.3" y="234.4" width="27.6" height="12.3" fill="#9d9d9d" fill-opacity="0.6"/><text x="525.1" y="243.8" font-size="10.4" text-anchor="middle" fill="#222" fill-opacity="0.85" textLength="23.6" lengthAdjust="spacingAndGlyphs">3.260</text><rect x="264.4" y="338.9" width="28.3" height="12.5" fill="#9d9d9d" fill-opacity="0.6"/><text x="278.5" y="348.5" font-size="10.4" text-anchor="middle" fill="#222" fill-opacity="0.85" textLength="24.3" lengthAdjust="spacingAndGlyphs">0.633</text><rect x="310" y="351.4" width="37" height="12.5" fill="#9d9d9d" fill-opacity="0.6"/><text x="328.5" y="361.0" font-size="10.4" text-anchor="middle" fill="#222" fill-opacity="0.85" textLength="33.0" lengthAdjust="spacingAndGlyphs">-11.288</text><rect x="278.3" y="357.6" width="26.1" height="10.6" fill="#9d9d9d" fill-opacity="0.6"/><text x="291.4" y="365.3" font-size="10.4" text-anchor="middle" fill="#222" fill-opacity="0.85" textLength="22.1" lengthAdjust="spacingAndGlyphs">-0.07</text><rect x="277.8" y="366.5" width="38.6" height="12.5" fill="#9d9d9d" fill-opacity="0.6"/><text x="297.1" y="376.1" font-size="10.4" text-anchor="middle" fill="#222" fill-opacity="0.85" textLength="34.6" lengthAdjust="spacingAndGlyphs">-38.390</text><rect x="285.6" y="622.8" width="31.3" height="12.7" fill="#9d9d9d" fill-opacity="0.6"/><text x="301.2" y="632.6" font-size="10.4" text-anchor="middle" fill="#222" fill-opacity="0.85" textLength="27.3" lengthAdjust="spacingAndGlyphs">-2.229</text><rect x="271.5" y="641.2" width="22.5" height="11" fill="#9d9d9d" fill-opacity="0.6"/><text x="282.8" y="649.3" font-size="10.4" text-anchor="middle" fill="#222" fill-opacity="0.85" textLength="18.5" lengthAdjust="spacingAndGlyphs">0.26</text><rect x="252.5" y="653" width="19.5" height="11.6" fill="#9d9d9d" fill-opacity="0.6"/><text x="262.2" y="661.7" font-size="10.4" text-anchor="middle" fill="#222" fill-opacity="0.85" textLength="15.5" lengthAdjust="spacingAndGlyphs">0.06</text><rect x="304.2" y="654.2" width="27.7" height="12.2" fill="#9d9d9d" fill-opacity="0.6"/><text x="318.1" y="663.5" font-size="10.4" text-anchor="middle" fill="#222" fill-opacity="0.85" textLength="23.7" lengthAdjust="spacingAndGlyphs">0.078</text><rect x="242" y="672.6" width="29" height="12" fill="#9d9d9d" fill-opacity="0.6"/><text x="256.5" y="681.7" font-size="10.4" text-anchor="middle" fill="#222" fill-opacity="0.85" textLength="25.0" lengthAdjust="spacingAndGlyphs">-0.030</text></svg>
</main><aside id="results">
<div class="r" style="left:778.8px;top:140.4px;width:4.8px;height:550.2px;background:#d2d2d2;"></div>
<div class="r" style="left:783.6px;top:140.6px;width:495.4px;height:23.4px;background:#f26d21;"></div>
<div class="r" style="left:788px;top:144px;width:59.8px;height:20px;background:#f0f0f0;"></div>
<span class="t" style="left:799.60px;top:147.50px;font-size:10.5px;color:#f26d21;letter-spacing:-0.207px;">Analysis</span>
<span class="t" style="left:859.60px;top:147.50px;font-size:10.5px;color:#fff;letter-spacing:-0.300px;">Plates</span>
<span class="t" style="left:909.60px;top:147.50px;font-size:10.5px;color:#fff;letter-spacing:0.077px;">Bolts</span>
<span class="t" style="left:955.00px;top:147.50px;font-size:10.5px;color:#fff;letter-spacing:0.022px;">Anchors</span>
<span class="t" style="left:1015.00px;top:147.50px;font-size:10.5px;color:#fff;letter-spacing:0.167px;">Welds</span>
<span class="t" style="left:1066.00px;top:147.50px;font-size:10.5px;color:#fff;letter-spacing:0.047px;">Concrete block</span>
<span class="t" style="left:798.00px;top:177.00px;font-size:11.5px;color:#f26d21;letter-spacing:-0.300px;font-weight:bold;transform:scaleX(0.9920);">Status of FE analysis</span>
<div id="loadgrid">
<div class="r" style="left:794px;top:194.4px;width:312.6px;height:29px;background:#f0f0f0;"></div>
<div class="r" style="left:794px;top:452.36px;width:312.6px;height:25.44px;background:#e3e3e3;"></div>
<svg class="r" style="left:0px;top:0px;" width="1280" height="720" viewBox="0 0 1280 720"><path d="M794.5,194.4 L794.5,657.88" stroke="#b9b9b9" stroke-width="1.1"/><path d="M819.9,194.4 L819.9,657.88" stroke="#b9b9b9" stroke-width="1.1"/><path d="M861.5,194.4 L861.5,657.88" stroke="#b9b9b9" stroke-width="1.1"/><path d="M1036.9,194.4 L1036.9,657.88" stroke="#b9b9b9" stroke-width="1.1"/><path d="M1106.5,194.4 L1106.5,657.88" stroke="#b9b9b9" stroke-width="1.1"/><path d="M1107.4,194.4 L1107.4,655.88" stroke="#c9c9c9" stroke-width="1"/><path d="M794,194.9 L1107,194.9" stroke="#b9b9b9" stroke-width="1.1"/><path d="M794,223.40 L1107,223.40" stroke="#b9b9b9" stroke-width="1.1"/><path d="M794,248.84 L1107,248.84" stroke="#b9b9b9" stroke-width="1.1"/><path d="M794,274.28 L1107,274.28" stroke="#b9b9b9" stroke-width="1.1"/><path d="M794,299.72 L1107,299.72" stroke="#b9b9b9" stroke-width="1.1"/><path d="M794,325.16 L1107,325.16" stroke="#b9b9b9" stroke-width="1.1"/><path d="M794,350.60 L1107,350.60" stroke="#b9b9b9" stroke-width="1.1"/><path d="M794,376.04 L1107,376.04" stroke="#b9b9b9" stroke-width="1.1"/><path d="M794,401.48 L1107,401.48" stroke="#b9b9b9" stroke-width="1.1"/><path d="M794,426.92 L1107,426.92" stroke="#b9b9b9" stroke-width="1.1"/><path d="M794,452.36 L1107,452.36" stroke="#b9b9b9" stroke-width="1.1"/><path d="M794,477.80 L1107,477.80" stroke="#b9b9b9" stroke-width="1.1"/><path d="M794,503.24 L1107,503.24" stroke="#b9b9b9" stroke-width="1.1"/><path d="M794,528.68 L1107,528.68" stroke="#b9b9b9" stroke-width="1.1"/><path d="M794,554.12 L1107,554.12" stroke="#b9b9b9" stroke-width="1.1"/><path d="M794,579.56 L1107,579.56" stroke="#b9b9b9" stroke-width="1.1"/><path d="M794,605.00 L1107,605.00" stroke="#b9b9b9" stroke-width="1.1"/><path d="M794,630.44 L1107,630.44" stroke="#b9b9b9" stroke-width="1.1"/><path d="M794,655.88 L1107,655.88" stroke="#b9b9b9" stroke-width="1.1"/></svg>
<span class="t" style="left:823.60px;top:202.40px;font-size:10.5px;color:#2a2a2a;letter-spacing:-0.300px;font-weight:bold;transform:scaleX(0.9886);">Status</span>
<span class="t" style="left:865.60px;top:202.40px;font-size:10.5px;color:#2a2a2a;letter-spacing:-0.300px;font-weight:bold;transform:scaleX(0.9504);">Loads</span>
<span class="t" style="left:1040.60px;top:202.40px;font-size:10.5px;color:#2a2a2a;letter-spacing:0.015px;font-weight:bold;">Applied [%]</span>
<svg class="r" style="left:832.6px;top:228.92000000000002px;" width="16" height="16" viewBox="0 0 16 16"><circle cx="8" cy="8" r="6.9" fill="#58c242" stroke="#8fdc78" stroke-width="1"/><path d="M4.2,8.2 L7,11 L12,5.4" fill="none" stroke="#fff" stroke-width="2"/></svg>
<span class="t" style="left:866.00px;top:230.02px;font-size:10.5px;color:#444;letter-spacing:-0.300px;transform:scaleX(0.9533);">100 : 1.4DE</span>
<span class="t" style="left:1041.40px;top:230.02px;font-size:10.5px;color:#444;letter-spacing:-0.300px;transform:scaleX(0.9352);">100.0</span>
<svg class="r" style="left:832.6px;top:254.36px;" width="16" height="16" viewBox="0 0 16 16"><circle cx="8" cy="8" r="6.9" fill="#58c242" stroke="#8fdc78" stroke-width="1"/><path d="M4.2,8.2 L7,11 L12,5.4" fill="none" stroke="#fff" stroke-width="2"/></svg>
<span class="t" style="left:866.00px;top:255.46px;font-size:10.5px;color:#444;letter-spacing:-0.300px;transform:scaleX(0.9841);">101 : 1.4DO</span>
<span class="t" style="left:1041.40px;top:255.46px;font-size:10.5px;color:#444;letter-spacing:-0.300px;transform:scaleX(0.9352);">100.0</span>
<svg class="r" style="left:832.6px;top:279.80000000000007px;" width="16" height="16" viewBox="0 0 16 16"><circle cx="8" cy="8" r="6.9" fill="#58c242" stroke="#8fdc78" stroke-width="1"/><path d="M4.2,8.2 L7,11 L12,5.4" fill="none" stroke="#fff" stroke-width="2"/></svg>
<span class="t" style="left:866.00px;top:280.90px;font-size:10.5px;color:#444;letter-spacing:-0.300px;transform:scaleX(0.9847);">102 : 1.2D+1.6L+0.5LR</span>
<span class="t" style="left:1041.40px;top:280.90px;font-size:10.5px;color:#444;letter-spacing:-0.300px;transform:scaleX(0.9352);">100.0</span>
<svg class="r" style="left:832.6px;top:305.24000000000007px;" width="16" height="16" viewBox="0 0 16 16"><circle cx="8" cy="8" r="6.9" fill="#58c242" stroke="#8fdc78" stroke-width="1"/><path d="M4.2,8.2 L7,11 L12,5.4" fill="none" stroke="#fff" stroke-width="2"/></svg>
<span class="t" style="left:866.00px;top:306.34px;font-size:10.5px;color:#444;letter-spacing:-0.300px;transform:scaleX(0.9871);">103 : 1.2D+1.6LR+1.0L</span>
<span class="t" style="left:1041.40px;top:306.34px;font-size:10.5px;color:#444;letter-spacing:-0.300px;transform:scaleX(0.9352);">100.0</span>
<svg class="r" style="left:832.6px;top:330.68000000000006px;" width="16" height="16" viewBox="0 0 16 16"><circle cx="8" cy="8" r="6.9" fill="#58c242" stroke="#8fdc78" stroke-width="1"/><path d="M4.2,8.2 L7,11 L12,5.4" fill="none" stroke="#fff" stroke-width="2"/></svg>
<span class="t" style="left:866.00px;top:331.78px;font-size:10.5px;color:#444;letter-spacing:-0.228px;">104 : 1.2D+1.6LR+0.5W(+X)</span>
<span class="t" style="left:1041.40px;top:331.78px;font-size:10.5px;color:#444;letter-spacing:-0.300px;transform:scaleX(0.9352);">100.0</span>
<svg class="r" style="left:832.6px;top:356.12000000000006px;" width="16" height="16" viewBox="0 0 16 16"><circle cx="8" cy="8" r="6.9" fill="#58c242" stroke="#8fdc78" stroke-width="1"/><path d="M4.2,8.2 L7,11 L12,5.4" fill="none" stroke="#fff" stroke-width="2"/></svg>
<span class="t" style="left:866.00px;top:357.22px;font-size:10.5px;color:#444;letter-spacing:-0.243px;">105 : 1.2D+1.6LR+0.5W(-X)</span>
<span class="t" style="left:1041.40px;top:357.22px;font-size:10.5px;color:#444;letter-spacing:-0.300px;transform:scaleX(0.9352);">100.0</span>
<svg class="r" style="left:832.6px;top:381.56000000000006px;" width="16" height="16" viewBox="0 0 16 16"><circle cx="8" cy="8" r="6.9" fill="#58c242" stroke="#8fdc78" stroke-width="1"/><path d="M4.2,8.2 L7,11 L12,5.4" fill="none" stroke="#fff" stroke-width="2"/></svg>
<span class="t" style="left:866.00px;top:382.66px;font-size:10.5px;color:#444;letter-spacing:-0.203px;">106 : 1.2D+1.6LR+0.5W(+Z)</span>
<span class="t" style="left:1041.40px;top:382.66px;font-size:10.5px;color:#444;letter-spacing:-0.300px;transform:scaleX(0.9352);">100.0</span>
<svg class="r" style="left:832.6px;top:407.00000000000006px;" width="16" height="16" viewBox="0 0 16 16"><circle cx="8" cy="8" r="6.9" fill="#58c242" stroke="#8fdc78" stroke-width="1"/><path d="M4.2,8.2 L7,11 L12,5.4" fill="none" stroke="#fff" stroke-width="2"/></svg>
<span class="t" style="left:866.00px;top:408.10px;font-size:10.5px;color:#444;letter-spacing:-0.219px;">107 : 1.2D+1.6LR+0.5W(-Z)</span>
<span class="t" style="left:1041.40px;top:408.10px;font-size:10.5px;color:#444;letter-spacing:-0.300px;transform:scaleX(0.9352);">100.0</span>
<svg class="r" style="left:832.6px;top:432.44000000000005px;" width="16" height="16" viewBox="0 0 16 16"><circle cx="8" cy="8" r="6.9" fill="#58c242" stroke="#8fdc78" stroke-width="1"/><path d="M4.2,8.2 L7,11 L12,5.4" fill="none" stroke="#fff" stroke-width="2"/></svg>
<span class="t" style="left:866.00px;top:433.54px;font-size:10.5px;color:#444;letter-spacing:-0.236px;">108 : 1.2D+0.5L+0.5LR+1.0W(+X)</span>
<span class="t" style="left:1041.40px;top:433.54px;font-size:10.5px;color:#444;letter-spacing:-0.300px;transform:scaleX(0.9352);">100.0</span>
<svg class="r" style="left:832.6px;top:457.88000000000005px;" width="16" height="16" viewBox="0 0 16 16"><circle cx="8" cy="8" r="6.9" fill="#58c242" stroke="#8fdc78" stroke-width="1"/><path d="M4.2,8.2 L7,11 L12,5.4" fill="none" stroke="#fff" stroke-width="2"/></svg>
<span class="t" style="left:866.00px;top:458.98px;font-size:10.5px;color:#444;letter-spacing:-0.248px;">109 : 1.2D+0.5L+0.5LR+1.0W(-X)</span>
<span class="t" style="left:1041.40px;top:458.98px;font-size:10.5px;color:#444;letter-spacing:-0.300px;transform:scaleX(0.9352);">100.0</span>
<svg class="r" style="left:832.6px;top:483.32000000000005px;" width="16" height="16" viewBox="0 0 16 16"><circle cx="8" cy="8" r="6.9" fill="#58c242" stroke="#8fdc78" stroke-width="1"/><path d="M4.2,8.2 L7,11 L12,5.4" fill="none" stroke="#fff" stroke-width="2"/></svg>
<span class="t" style="left:866.00px;top:484.42px;font-size:10.5px;color:#444;letter-spacing:-0.189px;">110 : 1.2D+0.5L+0.5LR+1.0W(+Z)</span>
<span class="t" style="left:1041.40px;top:484.42px;font-size:10.5px;color:#444;letter-spacing:-0.300px;transform:scaleX(0.9352);">100.0</span>
<svg class="r" style="left:832.6px;top:508.76000000000005px;" width="16" height="16" viewBox="0 0 16 16"><circle cx="8" cy="8" r="6.9" fill="#58c242" stroke="#8fdc78" stroke-width="1"/><path d="M4.2,8.2 L7,11 L12,5.4" fill="none" stroke="#fff" stroke-width="2"/></svg>
<span class="t" style="left:866.00px;top:509.86px;font-size:10.5px;color:#444;letter-spacing:-0.174px;">111 : 1.2D+0.5L+0.5LR+1.0W(-Z)</span>
<span class="t" style="left:1041.40px;top:509.86px;font-size:10.5px;color:#444;letter-spacing:-0.300px;transform:scaleX(0.9352);">100.0</span>
<svg class="r" style="left:832.6px;top:534.2px;" width="16" height="16" viewBox="0 0 16 16"><circle cx="8" cy="8" r="6.9" fill="#58c242" stroke="#8fdc78" stroke-width="1"/><path d="M4.2,8.2 L7,11 L12,5.4" fill="none" stroke="#fff" stroke-width="2"/></svg>
<span class="t" style="left:866.00px;top:535.30px;font-size:10.5px;color:#444;letter-spacing:-0.300px;transform:scaleX(0.9926);">112 : 1.2D+0.5L+1.0EX+0.3EZ+1.0EY</span>
<span class="t" style="left:1041.40px;top:535.30px;font-size:10.5px;color:#444;letter-spacing:-0.300px;transform:scaleX(0.9352);">100.0</span>
<svg class="r" style="left:832.6px;top:559.64px;" width="16" height="16" viewBox="0 0 16 16"><circle cx="8" cy="8" r="6.9" fill="#58c242" stroke="#8fdc78" stroke-width="1"/><path d="M4.2,8.2 L7,11 L12,5.4" fill="none" stroke="#fff" stroke-width="2"/></svg>
<span class="t" style="left:866.00px;top:560.74px;font-size:10.5px;color:#444;letter-spacing:-0.300px;transform:scaleX(0.9902);">113 : 1.2D+0.5L+1.0EX+0.3EZ-1.0EY</span>
<span class="t" style="left:1041.40px;top:560.74px;font-size:10.5px;color:#444;letter-spacing:-0.300px;transform:scaleX(0.9352);">100.0</span>
<svg class="r" style="left:832.6px;top:585.08px;" width="16" height="16" viewBox="0 0 16 16"><circle cx="8" cy="8" r="6.9" fill="#58c242" stroke="#8fdc78" stroke-width="1"/><path d="M4.2,8.2 L7,11 L12,5.4" fill="none" stroke="#fff" stroke-width="2"/></svg>
<span class="t" style="left:866.00px;top:586.18px;font-size:10.5px;color:#444;letter-spacing:-0.300px;transform:scaleX(0.9902);">114 : 1.2D+0.5L+1.0EX-0.3EZ+1.0EY</span>
<span class="t" style="left:1041.40px;top:586.18px;font-size:10.5px;color:#444;letter-spacing:-0.300px;transform:scaleX(0.9352);">100.0</span>
<svg class="r" style="left:832.6px;top:610.52px;" width="16" height="16" viewBox="0 0 16 16"><circle cx="8" cy="8" r="6.9" fill="#58c242" stroke="#8fdc78" stroke-width="1"/><path d="M4.2,8.2 L7,11 L12,5.4" fill="none" stroke="#fff" stroke-width="2"/></svg>
<span class="t" style="left:866.00px;top:611.62px;font-size:10.5px;color:#444;letter-spacing:-0.300px;transform:scaleX(0.9879);">115 : 1.2D+0.5L+1.0EX-0.3EZ-1.0EY</span>
<span class="t" style="left:1041.40px;top:611.62px;font-size:10.5px;color:#444;letter-spacing:-0.300px;transform:scaleX(0.9352);">100.0</span>
<svg class="r" style="left:832.6px;top:635.96px;" width="16" height="16" viewBox="0 0 16 16"><circle cx="8" cy="8" r="6.9" fill="#58c242" stroke="#8fdc78" stroke-width="1"/><path d="M4.2,8.2 L7,11 L12,5.4" fill="none" stroke="#fff" stroke-width="2"/></svg>
<span class="t" style="left:866.00px;top:637.06px;font-size:10.5px;color:#444;letter-spacing:-0.300px;transform:scaleX(0.9902);">116 : 1.2D+0.5L-1.0EX+0.3EZ+1.0EY</span>
<span class="t" style="left:1041.40px;top:637.06px;font-size:10.5px;color:#444;letter-spacing:-0.300px;transform:scaleX(0.9352);">100.0</span>
<div class="r" style="left:819.4px;top:452.36px;width:42.2px;height:26.040000000000003px;background:transparent;border:1px solid #e9854a;"></div>
<svg class="r" style="left:802.6px;top:460.56px;" width="8" height="10" viewBox="0 0 8 10"><path d="M1.4,0.8 L5.8,4.8 L1.4,8.8" fill="none" stroke="#333" stroke-width="1.4"/></svg>
</div>
<div class="r" style="left:783.6px;top:668px;width:495.4px;height:4px;background:#d2d2d2;"></div>
<div class="r" style="left:786.4px;top:675.4px;width:21.4px;height:12.8px;background:#e9e9e9;border:1px solid #cfcfcf;"></div>
<svg class="r" style="left:789px;top:678px;" width="17" height="8" viewBox="0 0 17 8"><g stroke="#555" stroke-width="0.9" fill="none"><path d="M5.4,5.8 L1.6,2 M1.4,4.6 L1.4,1.8 L4.2,1.8"/><path d="M10.6,5.8 L14.4,2 M11.8,1.8 L14.6,1.8 L14.6,4.6"/></g></svg>
</aside><footer id="statusbar">
<div class="r metal sb" style="left:1px;top:690.6px;width:1278px;height:29.4px"><svg class="brush" width="1278" height="30" preserveAspectRatio="none"><filter id="brushed2" x="0" y="0" width="100%" height="100%"><feTurbulence type="fractalNoise" baseFrequency="0.003 0.7" numOctaves="3" seed="7"/><feColorMatrix type="matrix" values="0 0 0 0 1  0 0 0 0 1  0 0 0 0 1  0.3 0 0 0 -0.09"/></filter><filter id="brushedk2" x="0" y="0" width="100%" height="100%"><feTurbulence type="fractalNoise" baseFrequency="0.003 0.8" numOctaves="2" seed="13"/><feColorMatrix type="matrix" values="0 0 0 0 0  0 0 0 0 0  0 0 0 0 0  0.7 0 0 0 -0.2"/></filter><rect width="1278" height="30" filter="url(#brushedk2)"/><rect width="1278" height="30" filter="url(#brushed2)"/></svg></div>
<span class="t" style="left:23.00px;top:699.20px;font-size:10.5px;color:#8c8c8c;letter-spacing:-0.300px;font-weight:bold;transform:scaleX(0.9915);">Design code:</span>
<span class="t" style="left:89.60px;top:699.20px;font-size:10.5px;color:#fff;letter-spacing:0.013px;font-weight:bold;">AISC - LRFD (2016)</span>
<span class="t" style="left:203.00px;top:699.20px;font-size:10.5px;color:#8c8c8c;letter-spacing:-0.300px;font-weight:bold;transform:scaleX(0.9957);">Analysis:</span>
<span class="t" style="left:251.00px;top:699.20px;font-size:10.5px;color:#fff;letter-spacing:-0.209px;font-weight:bold;">Stress, strain</span>
<span class="t" style="left:333.00px;top:699.20px;font-size:10.5px;color:#8c8c8c;letter-spacing:-0.271px;font-weight:bold;">Load effects:</span>
<span class="t" style="left:400.60px;top:699.20px;font-size:10.5px;color:#fff;letter-spacing:-0.008px;font-weight:bold;">In equilibrium</span>
<span class="t" style="left:488.00px;top:699.20px;font-size:10.5px;color:#8c8c8c;letter-spacing:-0.300px;font-weight:bold;transform:scaleX(0.9946);">Units:</span>
<span class="t" style="left:523.00px;top:699.20px;font-size:10.5px;color:#fff;letter-spacing:0.083px;font-weight:bold;">in</span>
<div class="r" style="left:1240px;top:695px;width:39px;height:22px;overflow:hidden">
<span class="t" style="left:9.60px;top:5.40px;font-size:10px;color:#e8761e;font-weight:bold;letter-spacing:-0.1px;">www.</span>
<span class="t" style="left:34.30px;top:5.40px;font-size:10px;color:#fff;font-weight:bold;">ideastatica.com</span>
</div>
</footer>
</div>
</body></html>
